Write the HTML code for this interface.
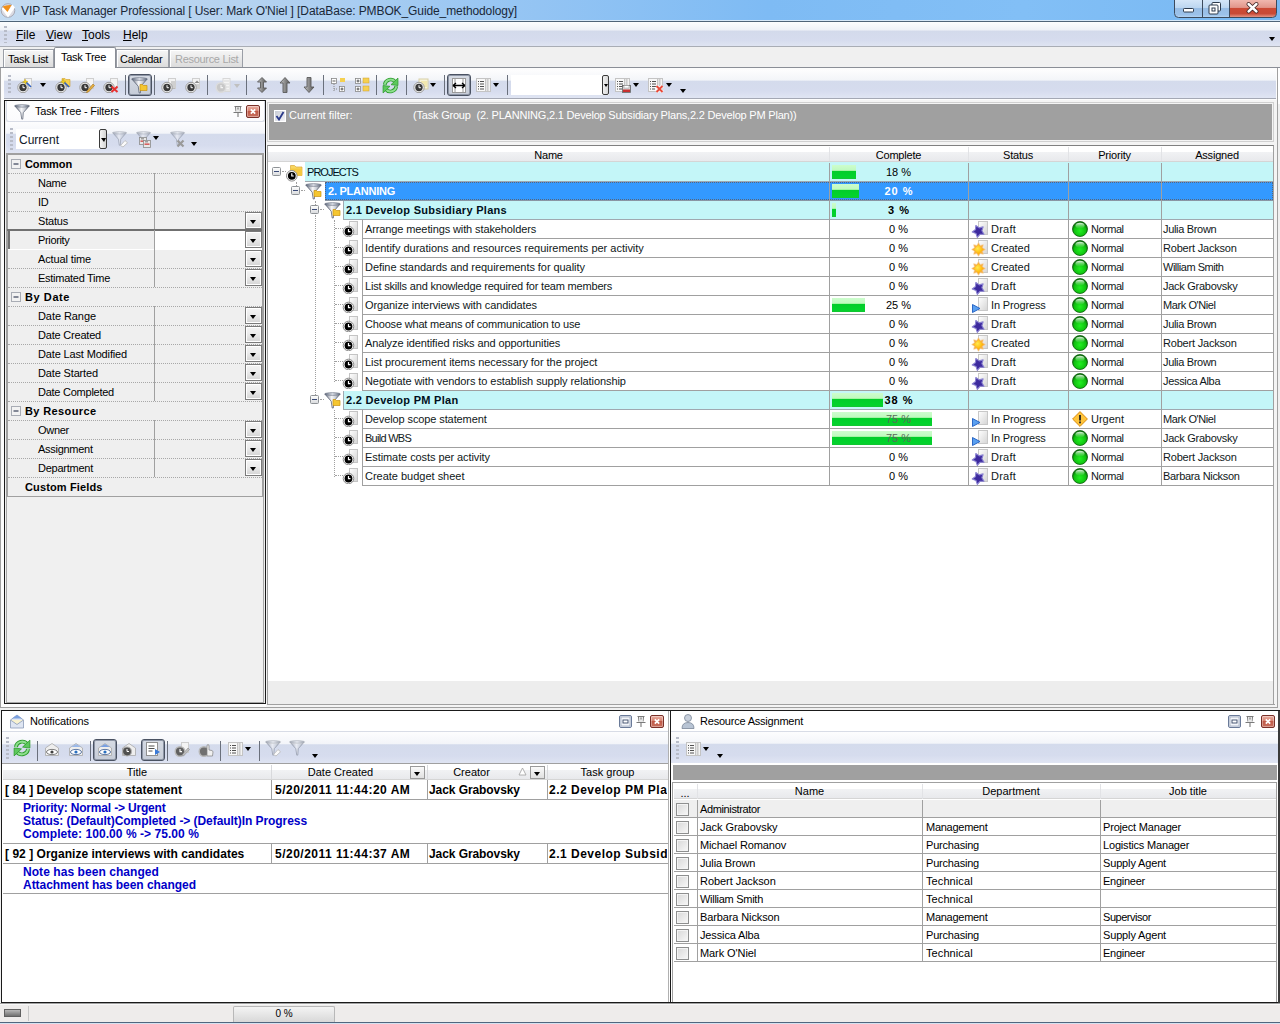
<!DOCTYPE html>
<html><head><meta charset="utf-8"><style>
*{box-sizing:border-box}
body{margin:0;width:1280px;height:1024px;position:relative;overflow:hidden;background:#f0f0f0;font-family:'Liberation Sans', sans-serif;font-size:11px;color:#000}
.a{position:absolute}
.t{position:absolute;white-space:nowrap;line-height:1}
.grip{position:absolute;width:3px;background:repeating-linear-gradient(to bottom,#b8bcc8 0 2px,transparent 2px 4px)}
.sep{position:absolute;width:1px;background:#9da3b0;border-right:1px solid #fff;width:2px}
.tb{position:absolute;background:linear-gradient(to bottom,#fdfdfe 0%,#f3f5f9 36%,#d4dbec 40%,#d6dcee 75%,#e0e5f3 100%)}
.dd{position:absolute;width:0;height:0;border-left:3px solid transparent;border-right:3px solid transparent;border-top:4px solid #000}
.pbtn{position:absolute;border:1px solid #4a5262;border-radius:3px;background:linear-gradient(#d6dbe4,#c6ccd8);box-shadow:inset 0 0 0 1px #8e96a6}
.dots{position:absolute;border-left:1px dotted #a0a0a0}
.doth{position:absolute;border-top:1px dotted #a0a0a0}
</style></head><body>

<svg width="0" height="0" style="position:absolute">
<defs>
<linearGradient id="gball" x1="0" y1="0" x2="0" y2="1"><stop offset="0" stop-color="#0b8a0b"/><stop offset="0.6" stop-color="#10d010"/><stop offset="1" stop-color="#0a9a0a"/></linearGradient>
<radialGradient id="gsun" cx="0.4" cy="0.4" r="0.6"><stop offset="0" stop-color="#ffe850"/><stop offset="1" stop-color="#ffb000"/></radialGradient>
<linearGradient id="gpage" x1="0" y1="0" x2="1" y2="1"><stop offset="0" stop-color="#ffffff"/><stop offset="1" stop-color="#d4d4d4"/></linearGradient>
<linearGradient id="gfun" x1="0" y1="0" x2="1" y2="0"><stop offset="0" stop-color="#8c8c8c"/><stop offset="0.5" stop-color="#f0f0f0"/><stop offset="1" stop-color="#9a9a9a"/></linearGradient>
<symbol id="clock" viewBox="0 0 16 17"><rect x="7.5" y="1.5" width="8" height="13" fill="url(#gpage)" stroke="#c4c4c4"/><circle cx="6.5" cy="11.5" r="5.3" fill="#fff" stroke="#8a8a8a" stroke-width="1"/><circle cx="6.5" cy="11.5" r="3.9" fill="#000"/><path d="M6.5 9v2.7h2" stroke="#fff" stroke-width="1.2" fill="none"/></symbol>
<symbol id="draft" viewBox="0 0 18 18"><rect x="7.5" y="1.5" width="9" height="13" fill="url(#gpage)" stroke="#c8c8c8"/><path d="M4.84 5.49 L8.15 7.86 L12.11 6.90 L10.87 10.79 L13.01 14.25 L8.94 14.28 L6.30 17.38 L5.01 13.52 L1.25 11.97 L4.53 9.55 Z" fill="#3d2a9e" stroke="#8880d0" stroke-width="1.1" stroke-linejoin="round"/></symbol>
<symbol id="created" viewBox="0 0 18 18"><rect x="7.5" y="1.5" width="9" height="13" fill="url(#gpage)" stroke="#c8c8c8"/><path d="M7.50 3.70 L9.18 6.43 L12.31 5.69 L11.57 8.82 L14.30 10.50 L11.57 12.18 L12.31 15.31 L9.18 14.57 L7.50 17.30 L5.82 14.57 L2.69 15.31 L3.43 12.18 L0.70 10.50 L3.43 8.82 L2.69 5.69 L5.82 6.43 Z" fill="#f8b040" stroke="#f4c890" stroke-width="0.6"/><path d="M7.5 5.8 L12.2 10.5 L7.5 15.2 L2.8 10.5 Z" fill="url(#gsun)"/></symbol>
<symbol id="inprog" viewBox="0 0 18 18"><rect x="7.5" y="1.5" width="9" height="13" fill="url(#gpage)" stroke="#c8c8c8"/><path d="M1.5 8.5 L9 12.5 L1.5 16.5 Z" fill="#5aa0f0" stroke="#1e5cc0" stroke-width="0.9" stroke-linejoin="round"/></symbol>
<linearGradient id="ghl" x1="0" y1="0" x2="0" y2="1"><stop offset="0" stop-color="#f4fff4" stop-opacity="0.95"/><stop offset="1" stop-color="#60d060" stop-opacity="0.2"/></linearGradient><radialGradient id="gball2" cx="0.5" cy="0.62" r="0.55"><stop offset="0" stop-color="#22f022"/><stop offset="0.7" stop-color="#10c010"/><stop offset="1" stop-color="#067006"/></radialGradient><symbol id="ball" viewBox="0 0 16 16"><circle cx="8" cy="8" r="7.5" fill="url(#gball2)" stroke="#0a5a0a" stroke-width="0.8"/><ellipse cx="8" cy="4.6" rx="4.6" ry="2.9" fill="url(#ghl)"/></symbol>
<symbol id="urgent" viewBox="0 0 16 16"><path d="M8 0.6 L15.4 8 L8 15.4 L0.6 8 Z" fill="#ffc43a" stroke="#d88a10" stroke-width="1"/><rect x="7.1" y="4" width="1.8" height="5.5" fill="#222"/><rect x="7.1" y="10.5" width="1.8" height="1.8" fill="#222"/></symbol>
<linearGradient id="gfun2" x1="0" y1="0" x2="1" y2="0"><stop offset="0" stop-color="#6a7284"/><stop offset="0.45" stop-color="#f8f8fa"/><stop offset="0.7" stop-color="#c8ccd4"/><stop offset="1" stop-color="#6a7284"/></linearGradient>
<linearGradient id="grim" x1="0" y1="0" x2="1" y2="0"><stop offset="0" stop-color="#707a8c"/><stop offset="0.5" stop-color="#d8dce4"/><stop offset="1" stop-color="#707a8c"/></linearGradient>
<symbol id="funnel" viewBox="0 0 18 18"><path d="M0.8 2 L16.2 2 L9.8 9.2 L9.3 16 L8.2 16 L7.2 9.2 Z" fill="url(#gfun2)" stroke="#5a6274" stroke-width="0.8" stroke-linejoin="round"/><ellipse cx="8.5" cy="2" rx="7.7" ry="1.4" fill="url(#grim)" stroke="#5a6274" stroke-width="0.5"/></symbol>
<symbol id="funfold" viewBox="0 0 18 18"><path d="M0.8 2 L16.2 2 L9.8 9.2 L9.3 16 L8.2 16 L7.2 9.2 Z" fill="url(#gfun2)" stroke="#5a6274" stroke-width="0.8" stroke-linejoin="round"/><ellipse cx="8.5" cy="2" rx="7.7" ry="1.4" fill="url(#grim)" stroke="#5a6274" stroke-width="0.5"/><path d="M9 7.5 h2.5 l1 1 h3.5 v5 h-7 z" fill="#f5c630" stroke="#c89210" stroke-width="0.7"/></symbol>
<symbol id="folderclock" viewBox="0 0 18 18"><path d="M4.5 1.5 h4 l1.5 1.5 h6 v8.5 h-11.5 z" fill="#f8d660" stroke="#d8a838" stroke-width="0.7"/><path d="M4.5 4.5 h11.5 v7 h-11.5 z" fill="#f4c840"/><circle cx="5.8" cy="11.8" r="5.3" fill="#fff" stroke="#8a8a8a" stroke-width="1"/><circle cx="5.8" cy="11.8" r="3.9" fill="#000"/><path d="M5.8 9.3v2.7h2" stroke="#fff" stroke-width="1.2" fill="none"/></symbol>
<linearGradient id="gbox" x1="0" y1="0" x2="0" y2="1"><stop offset="0" stop-color="#ffffff"/><stop offset="1" stop-color="#d8dadc"/></linearGradient><symbol id="minus" viewBox="0 0 9 9"><rect x="0.5" y="0.5" width="8" height="8" rx="1" fill="url(#gbox)" stroke="#8e9296"/><path d="M2 4.5h5" stroke="#3a4a78" stroke-width="1"/></symbol>
</defs></svg>

<div class="a" style="left:0;top:0;width:1280px;height:22px;background:linear-gradient(to right,#c4dbf1 0%,#b4d2f0 20%,#96c5f3 40%,#7ebbf4 60%,#82bff6 80%,#78b8f2 100%);border-bottom:1px solid #4f6478;box-shadow:inset 0 -1px 0 #d6e8f8"></div>
<svg class="a" style="left:0px;top:2px" width="17" height="17" viewBox="0 0 17 17"><circle cx="8" cy="8.5" r="6.8" fill="#dcdce4" stroke="#9a9aa6" stroke-width="0.8"/><path d="M1.5 6.5 L5.5 5 L8 9 L12.5 2.5 L15 5.5 L8 15.5 Z" fill="#fff"/><path d="M2.5 4.5 Q7 2.5 11.5 3 L7.5 10 Z" fill="#f0901a"/></svg>
<div class="t" style="left:21px;top:5px;font-size:12px;color:#1a2838;letter-spacing:-0.1px">VIP Task Manager Professional [ User: Mark O'Niel ] [DataBase: PMBOK_Guide_methodology]</div>
<svg class="a" style="left:1173px;top:0" width="105" height="19" viewBox="0 0 105 19">
<defs>
<linearGradient id="wbb" x1="0" y1="0" x2="0" y2="1"><stop offset="0" stop-color="#d4e6f8"/><stop offset="0.44" stop-color="#bcd6f0"/><stop offset="0.46" stop-color="#98bde4"/><stop offset="0.85" stop-color="#9cc2ea"/><stop offset="1" stop-color="#b8d8f4"/></linearGradient>
<linearGradient id="wbr" x1="0" y1="0" x2="0" y2="1"><stop offset="0" stop-color="#f0b8ae"/><stop offset="0.44" stop-color="#e2968a"/><stop offset="0.46" stop-color="#cc4a34"/><stop offset="0.8" stop-color="#c84a36"/><stop offset="1" stop-color="#e49484"/></linearGradient>
</defs>
<path d="M1.5 0 V13.5 Q1.5 17.5 5.5 17.5 H99.5 Q103.5 17.5 103.5 13.5 V0 Z" fill="url(#wbb)"/>
<path d="M56.5 0 V17 H99.5 Q103 17 103 13.5 V0 Z" fill="url(#wbr)"/>
<path d="M1.5 0 V13.5 Q1.5 17.5 5.5 17.5 H99.5 Q103.5 17.5 103.5 13.5 V0" fill="none" stroke="#3c4a5c" stroke-width="1"/>
<path d="M29.5 0 V17.5 M56.5 0 V17.5" stroke="#3c4a5c" stroke-width="1"/>
<rect x="10.5" y="8.5" width="10" height="3.5" rx="0.8" fill="#fff" stroke="#2c3a4c" stroke-width="1"/>
<rect x="39" y="2.5" width="8.5" height="8.5" rx="1" fill="#fff" stroke="#2c3a4c" stroke-width="1"/>
<rect x="36" y="5" width="9" height="9" rx="1" fill="#fff" stroke="#2c3a4c" stroke-width="1"/>
<rect x="39" y="8" width="3" height="3" fill="#fff" stroke="#2c3a4c" stroke-width="1"/>
<path d="M75.5 4 L83.5 11.5 M83.5 4 L75.5 11.5" stroke="#3a2020" stroke-width="4" stroke-linecap="round"/>
<path d="M75.5 4 L83.5 11.5 M83.5 4 L75.5 11.5" stroke="#fff" stroke-width="2.4" stroke-linecap="round"/>
</svg>
<div class="a" style="left:0;top:22px;width:1280px;height:25px;background:linear-gradient(to bottom,#fcfdfe 0%,#eef1f7 34%,#d3daeb 37%,#d6dcee 75%,#dfe4f2 100%);border-bottom:1px solid #a9adb5"></div>
<div class="grip" style="left:4px;top:26px;height:17px"></div>
<div class="t" style="left:16px;top:29px;font-size:12px;color:#000"><u style="text-decoration-thickness:1px;text-underline-offset:1px">F</u>ile</div>
<div class="t" style="left:46px;top:29px;font-size:12px;color:#000"><u style="text-decoration-thickness:1px;text-underline-offset:1px">V</u>iew</div>
<div class="t" style="left:82px;top:29px;font-size:12px;color:#000"><u style="text-decoration-thickness:1px;text-underline-offset:1px">T</u>ools</div>
<div class="t" style="left:123px;top:29px;font-size:12px;color:#000"><u style="text-decoration-thickness:1px;text-underline-offset:1px">H</u>elp</div>
<div class="dd" style="left:1269px;top:37px"></div>
<div class="a" style="left:0;top:67px;width:1280px;height:1px;background:#8a8e96"></div>
<div class="a" style="left:3px;top:49px;width:51px;height:18px;background:linear-gradient(#f6f6f6,#dcdcdc);border:1px solid #9a9ea6;border-bottom:none;box-shadow:inset 1px 1px 0 #fff"></div>
<div class="t" style="left:8px;top:54px;font-size:11px;letter-spacing:-0.3px;color:#000">Task List</div>
<div class="a" style="left:54px;top:47px;width:62px;height:21px;background:#fff;border:1px solid #8a8e96;border-bottom:none;border-radius:2px 2px 0 0"></div>
<div class="t" style="left:61px;top:52px;font-size:11px;letter-spacing:-0.3px">Task Tree</div>
<div class="a" style="left:116px;top:49px;width:53px;height:18px;background:linear-gradient(#f6f6f6,#dcdcdc);border:1px solid #9a9ea6;border-bottom:none;box-shadow:inset 1px 1px 0 #fff"></div>
<div class="t" style="left:120px;top:54px;font-size:11px;letter-spacing:-0.3px;color:#000">Calendar</div>
<div class="a" style="left:169px;top:49px;width:74px;height:18px;background:linear-gradient(#f6f6f6,#dcdcdc);border:1px solid #9a9ea6;border-bottom:none;box-shadow:inset 1px 1px 0 #fff"></div>
<div class="t" style="left:175px;top:54px;font-size:11px;letter-spacing:-0.3px;color:#a8a8a8">Resource List</div>
<div class="a" style="left:0;top:68px;width:1280px;height:36px;background:#fff"></div>
<div class="a" style="left:0px;top:68px;width:1278px;height:640px;border:1px solid #a0a0a0;border-top:none;background:#fcfcfc"></div>
<div class="tb" style="left:4px;top:70px;width:1272px;height:29px;border-bottom:1px solid #a4a8b4"></div>
<div class="grip" style="left:8px;top:75px;height:20px"></div>
<svg class="a" style="left:17px;top:77px;" width="16" height="16" viewBox="0 0 16 16"><rect x="7.5" y="1.5" width="7" height="10" fill="#f4f4f4" stroke="#cfcfcf"/><circle cx="6" cy="10.5" r="5.2" fill="#f4f4f4" stroke="#9a9a9a" stroke-width="1"/><circle cx="6" cy="10.5" r="3.7" fill="#3a3a3a"/><path d="M6 8.2v2.5h1.9" stroke="#fff" stroke-width="1" fill="none"/><path d="M9 5 L14 10" stroke="#3060c0" stroke-width="1.6"/><path d="M8 2 L9 4 L11 4.5 L9 5.5 L8.5 7.5 L7.5 5.5 L5.5 5 L7.5 4 Z" fill="#f0d020" stroke="#c0a010" stroke-width="0.4"/></svg>
<div class="dd" style="left:40px;top:83px"></div>
<svg class="a" style="left:55px;top:77px;" width="16" height="16" viewBox="0 0 16 16"><path d="M7 1.5 h3 l1 1 h4 v7 h-8 z" fill="#f5d050" stroke="#d0a030" stroke-width="0.6"/><circle cx="6" cy="10.5" r="5.2" fill="#f4f4f4" stroke="#9a9a9a" stroke-width="1"/><circle cx="6" cy="10.5" r="3.7" fill="#3a3a3a"/><path d="M6 8.2v2.5h1.9" stroke="#fff" stroke-width="1" fill="none"/><path d="M9 5 L14 10" stroke="#3060c0" stroke-width="1.6"/><path d="M8 2 L9 4 L11 4.5 L9 5.5 L8.5 7.5 L7.5 5.5 L5.5 5 L7.5 4 Z" fill="#f0d020" stroke="#c0a010" stroke-width="0.4"/></svg>
<svg class="a" style="left:79px;top:77px;" width="16" height="16" viewBox="0 0 16 16"><rect x="7.5" y="1.5" width="7" height="10" fill="#f4f4f4" stroke="#cfcfcf"/><circle cx="6" cy="10.5" r="5.2" fill="#f4f4f4" stroke="#9a9a9a" stroke-width="1"/><circle cx="6" cy="10.5" r="3.7" fill="#3a3a3a"/><path d="M6 8.2v2.5h1.9" stroke="#fff" stroke-width="1" fill="none"/><path d="M8 14 L14 7 L15.5 8.5 L9.5 15 L7.5 15.5 Z" fill="#e8b040" stroke="#a07020" stroke-width="0.6"/></svg>
<svg class="a" style="left:103px;top:77px;" width="16" height="16" viewBox="0 0 16 16"><rect x="7.5" y="1.5" width="7" height="10" fill="#f4f4f4" stroke="#cfcfcf"/><circle cx="6" cy="10.5" r="5.2" fill="#f4f4f4" stroke="#9a9a9a" stroke-width="1"/><circle cx="6" cy="10.5" r="3.7" fill="#3a3a3a"/><path d="M6 8.2v2.5h1.9" stroke="#fff" stroke-width="1" fill="none"/><path d="M8.5 9.5 L14.5 15 M14.5 9.5 L8.5 15" stroke="#e83030" stroke-width="2"/></svg>
<div class="a" style="left:125px;top:75px;width:1px;height:20px;background:#6a707c"></div>
<div class="pbtn" style="left:128px;top:74px;width:24px;height:22px"></div>
<svg class="a" style="left:131px;top:77px;" width="18" height="18" viewBox="0 0 18 18"><use href="#funfold" width="18" height="18"/></svg>
<div class="a" style="left:154px;top:75px;width:1px;height:20px;background:#6a707c"></div>
<svg class="a" style="left:161px;top:77px;" width="16" height="16" viewBox="0 0 16 16"><rect x="7.5" y="1.5" width="7" height="10" fill="#f4f4f4" stroke="#cfcfcf"/><path d="M10 5h4 M10 7h4 M10 9h4 M10 11h4" stroke="#9a9a9a" stroke-width="0.8"/><circle cx="6" cy="10.5" r="5.2" fill="#f4f4f4" stroke="#9a9a9a" stroke-width="1"/><circle cx="6" cy="10.5" r="3.7" fill="#3a3a3a"/><path d="M6 8.2v2.5h1.9" stroke="#fff" stroke-width="1" fill="none"/></svg>
<svg class="a" style="left:185px;top:77px;" width="16" height="16" viewBox="0 0 16 16"><rect x="7.5" y="1.5" width="7" height="10" fill="#f4f4f4" stroke="#cfcfcf"/><path d="M9.5 6 L12 3.5 L14.5 6 Z" fill="#8a8a8a"/><path d="M10 8h4 M10 10h4" stroke="#9a9a9a" stroke-width="0.8"/><circle cx="6" cy="10.5" r="5.2" fill="#f4f4f4" stroke="#9a9a9a" stroke-width="1"/><circle cx="6" cy="10.5" r="3.7" fill="#3a3a3a"/><path d="M6 8.2v2.5h1.9" stroke="#fff" stroke-width="1" fill="none"/></svg>
<div class="a" style="left:207px;top:75px;width:1px;height:20px;background:#6a707c"></div>
<svg class="a" style="left:215px;top:77px;" width="16" height="16" viewBox="0 0 16 16"><rect x="8" y="1.5" width="7" height="13" fill="#f4f4f4" stroke="#d8d8d8"/><path d="M9 4h5M9 7h5M9 10h5M9 13h5" stroke="#d8d8d8"/><circle cx="6" cy="10.5" r="4.8" fill="#c8c8c8" stroke="#dcdcdc" stroke-width="1.4"/><path d="M6 8v2.6h2" stroke="#f4f4f4" stroke-width="1.1" fill="none"/></svg>
<div class="a" style="left:234px;top:84px;width:0;height:0;border-left:3px solid transparent;border-right:3px solid transparent;border-top:4px solid #c0c0c0"></div>
<div class="a" style="left:246px;top:75px;width:1px;height:20px;background:#6a707c"></div>
<svg width="0" height="0" style="position:absolute"><defs><linearGradient id="garr" x1="0" y1="0" x2="1" y2="0"><stop offset="0" stop-color="#d0d0d0"/><stop offset="0.5" stop-color="#8a8a8a"/><stop offset="1" stop-color="#5a5a5a"/></linearGradient></defs></svg>
<svg class="a" style="left:254px;top:77px;" width="16" height="16" viewBox="0 0 16 16"><path d="M8 0.5 L12.5 5 L9.5 5 L9.5 11 L12.5 11 L8 15.5 L3.5 11 L6.5 11 L6.5 5 L3.5 5 Z" fill="url(#garr)" stroke="#5a5a5a" stroke-width="0.9"/></svg>
<svg class="a" style="left:277px;top:77px;" width="16" height="16" viewBox="0 0 16 16"><path d="M8 0.5 L13 6 L10 6 L10 15.5 L6 15.5 L6 6 L3 6 Z" fill="url(#garr)" stroke="#5a5a5a" stroke-width="0.9"/></svg>
<svg class="a" style="left:301px;top:77px;" width="16" height="16" viewBox="0 0 16 16"><path d="M8 15.5 L13 10 L10 10 L10 0.5 L6 0.5 L6 10 L3 10 Z" fill="url(#garr)" stroke="#5a5a5a" stroke-width="0.9"/></svg>
<div class="a" style="left:323px;top:75px;width:1px;height:20px;background:#6a707c"></div>
<svg class="a" style="left:330px;top:77px;" width="16" height="16" viewBox="0 0 16 16"><rect x="1.5" y="1.5" width="5" height="5" fill="#fff" stroke="#888" stroke-width="0.8"/><path d="M2.5 4h3" stroke="#333" stroke-width="0.8"/><rect x="9.5" y="9.5" width="5" height="5" fill="#fff" stroke="#888" stroke-width="0.8"/><path d="M10.5 12h3" stroke="#333" stroke-width="0.8"/><path d="M12 10.5v3" stroke="#333" stroke-width="0.8"/><rect x="10" y="1" width="5" height="4" fill="#f5d050"/><path d="M4 7v8 M4 12h4" stroke="#888" stroke-dasharray="1 1"/></svg>
<svg class="a" style="left:354px;top:77px;" width="16" height="16" viewBox="0 0 16 16"><rect x="1.5" y="1.5" width="5" height="5" fill="#fff" stroke="#888" stroke-width="0.8"/><path d="M2.5 4h3" stroke="#333" stroke-width="0.8"/><path d="M4 2.5v3" stroke="#333" stroke-width="0.8"/><rect x="1.5" y="9.5" width="5" height="5" fill="#fff" stroke="#888" stroke-width="0.8"/><path d="M2.5 12h3" stroke="#333" stroke-width="0.8"/><path d="M4 10.5v3" stroke="#333" stroke-width="0.8"/><rect x="9" y="1" width="6" height="5" fill="#f5d050" stroke="#d0a030" stroke-width="0.5"/><rect x="9" y="9" width="6" height="5" fill="#f5d050" stroke="#d0a030" stroke-width="0.5"/></svg>
<div class="a" style="left:376px;top:75px;width:1px;height:20px;background:#6a707c"></div>
<svg class="a" style="left:382px;top:77px;" width="17" height="17" viewBox="0 0 16 16"><path d="M2.6 7.2 A5.6 5.6 0 0 1 12.6 4.6" stroke="#2a9a2a" stroke-width="3.4" fill="none"/><path d="M2.6 7.2 A5.6 5.6 0 0 1 12.6 4.6" stroke="#8ee08e" stroke-width="1.8" fill="none"/><path d="M15 1 L15 8 L8.5 7.2 Z" fill="#5cc85c" stroke="#2a9a2a" stroke-width="0.7"/><path d="M13.4 8.8 A5.6 5.6 0 0 1 3.4 11.4" stroke="#2a9a2a" stroke-width="3.4" fill="none"/><path d="M13.4 8.8 A5.6 5.6 0 0 1 3.4 11.4" stroke="#8ee08e" stroke-width="1.8" fill="none"/><path d="M1 15 L1 8 L7.5 8.8 Z" fill="#5cc85c" stroke="#2a9a2a" stroke-width="0.7"/></svg>
<div class="a" style="left:406px;top:75px;width:1px;height:20px;background:#6a707c"></div>
<svg class="a" style="left:413px;top:77px;" width="16" height="16" viewBox="0 0 16 16"><rect x="6" y="2" width="9" height="10" fill="#f8f4d8" stroke="#d8d0a8"/><rect x="8" y="4" width="6" height="6" fill="#f2e8b0"/><circle cx="6" cy="10.5" r="5.2" fill="#f4f4f4" stroke="#9a9a9a" stroke-width="1"/><circle cx="6" cy="10.5" r="3.7" fill="#3a3a3a"/><path d="M6 8.2v2.5h1.9" stroke="#fff" stroke-width="1" fill="none"/></svg>
<div class="dd" style="left:430px;top:83px"></div>
<div class="a" style="left:444px;top:75px;width:1px;height:20px;background:#6a707c"></div>
<div class="pbtn" style="left:447px;top:74px;width:24px;height:22px"></div>
<svg class="a" style="left:451px;top:78px;" width="16" height="16" viewBox="0 0 16 16"><rect x="1.5" y="0.5" width="13" height="14" fill="#fff" stroke="#9a9a9a"/><path d="M4 0.5v14 M12 0.5v14" stroke="#9a9a9a"/><path d="M2 7.5h12 M2 7.5 L5 5 M2 7.5 L5 10 M14 7.5 L11 5 M14 7.5 L11 10" stroke="#000" stroke-width="1.3" fill="none"/></svg>
<svg class="a" style="left:475px;top:77px;" width="16" height="16" viewBox="0 0 16 16"><rect x="1.5" y="1.5" width="9" height="13" fill="#f8f8f8" stroke="#c4c4c4"/><path d="M3 4.5h1 M5 4.5h4 M3 7h1 M5 7h4 M3 9.5h1 M5 9.5h4 M3 12h1 M5 12h4" stroke="#505050" stroke-width="1"/><rect x="10.5" y="1.5" width="2.5" height="13" fill="#e4e4e4" stroke="#c4c4c4"/><rect x="13" y="1.5" width="2.5" height="13" fill="#f4f4f4" stroke="#c4c4c4"/></svg>
<div class="dd" style="left:493px;top:83px"></div>
<div class="a" style="left:507px;top:75px;width:1px;height:20px;background:#6a707c"></div>
<div class="a" style="left:511px;top:75px;width:98px;height:20px;background:#fff;border:1px solid #fff"></div>
<div class="a" style="left:602px;top:75px;width:7px;height:20px;background:linear-gradient(to right,#f0f0f0,#d8d8d8);border:1px solid #3a3a3a;border-radius:2px"></div>
<div class="a" style="left:604px;top:84px;width:0;height:0;border-left:2px solid transparent;border-right:2px solid transparent;border-top:3px solid #000"></div>
<svg class="a" style="left:615px;top:77px;" width="16" height="16" viewBox="0 0 16 16"><rect x="0.5" y="1.5" width="9" height="13" fill="#f8f8f8" stroke="#c4c4c4"/><path d="M2 4.5h1 M4 4.5h4 M2 7h1 M4 7h4 M2 9.5h1 M4 9.5h4 M2 12h1 M4 12h3" stroke="#505050" stroke-width="1"/><rect x="9.5" y="1.5" width="2.5" height="13" fill="#e4e4e4" stroke="#c4c4c4"/><rect x="12" y="1.5" width="2.5" height="13" fill="#f4f4f4" stroke="#c4c4c4"/><rect x="7.5" y="8.5" width="8" height="7" fill="#d8d8d8" stroke="#606060" stroke-width="0.8"/><rect x="9" y="8.5" width="5" height="2.5" fill="#fff" stroke="#909090" stroke-width="0.5"/><rect x="8" y="12.5" width="7" height="2.5" fill="#c83030"/></svg>
<div class="dd" style="left:633px;top:83px"></div>
<svg class="a" style="left:648px;top:77px;" width="16" height="16" viewBox="0 0 16 16"><rect x="0.5" y="1.5" width="9" height="13" fill="#f8f8f8" stroke="#c4c4c4"/><path d="M2 4.5h1 M4 4.5h4 M2 7h1 M4 7h4 M2 9.5h1 M4 9.5h4 M2 12h1 M4 12h3" stroke="#505050" stroke-width="1"/><rect x="9.5" y="1.5" width="2.5" height="13" fill="#e4e4e4" stroke="#c4c4c4"/><rect x="12" y="1.5" width="2.5" height="13" fill="#f4f4f4" stroke="#c4c4c4"/><path d="M8.5 9 L14.5 15 M14.5 9 L8.5 15" stroke="#fff" stroke-width="3.4"/><path d="M8.5 9 L14.5 15 M14.5 9 L8.5 15" stroke="#e84a3a" stroke-width="2"/></svg>
<div class="dd" style="left:666px;top:83px"></div>
<div class="dd" style="left:680px;top:89px"></div>
<div class="a" style="left:4px;top:100px;width:262px;height:604px;border:1px solid #1a1a1a;border-width:1px 1px 1px 1px;background:#f0f0f0"></div>
<div class="a" style="left:6px;top:101px;width:259px;height:21px;background:linear-gradient(#fff,#fbfbfd);border:1px solid #d8dce6;border-top:none;border-radius:0 0 3px 3px"></div>
<svg class="a" style="left:14px;top:104px;" width="17" height="17" viewBox="0 0 18 18"><use href="#funnel" width="18" height="18"/></svg>
<div class="t" style="left:35px;top:106px;font-size:11px;letter-spacing:-0.18px">Task Tree - Filters</div>
<svg class="a" style="left:232px;top:105px;" width="12" height="12" viewBox="0 0 12 12"><path d="M2.5 1.5 h7 M3.5 1.5 L4 6.5 M8.5 1.5 L8 6.5 M1.5 7.5 h9 M6 7.5 v4.5" stroke="#7a7a7a" stroke-width="1.1" fill="none"/><rect x="4.3" y="2" width="3.4" height="5" fill="#e8e8e8"/><rect x="5.2" y="2.5" width="1.6" height="2" fill="#9a9a9a"/></svg>
<div class="a" style="left:246px;top:105px;width:14px;height:13px;border:1px solid #7a3028;border-radius:2px;background:linear-gradient(#eab0a4,#d88270 45%,#c05a48 50%,#c8705e);box-shadow:inset 0 0 0 1px rgba(255,255,255,0.35)"></div><svg class="a" style="left:246px;top:105px" width="14" height="13" viewBox="0 0 14 13"><path d="M4.8 4.3 L9.2 8.7 M9.2 4.3 L4.8 8.7" stroke="#fff" stroke-width="1.7"/></svg>
<div class="tb" style="left:6px;top:122px;width:259px;height:31px"></div>
<div class="grip" style="left:10px;top:128px;height:22px"></div>
<div class="a" style="left:16px;top:129px;width:84px;height:20px;background:#fff"></div>
<div class="t" style="left:19px;top:134px;font-size:12px;color:#101828">Current</div>
<div class="a" style="left:99px;top:129px;width:8px;height:20px;background:linear-gradient(to right,#f4f4f4,#d4d4d4);border:1px solid #3a3a3a;border-radius:2px"></div>
<div class="a" style="left:101px;top:138px;width:0;height:0;border-left:3px solid transparent;border-right:2px solid transparent;border-top:4px solid #000"></div>
<svg class="a" style="left:112px;top:131px;" width="17" height="17" viewBox="0 0 17 17"><g opacity="0.5"><use href="#funnel" x="0" y="0" width="16" height="16"/></g><path d="M8.5 14.5 L13 9.5 L15.5 11.8 L11 16 Z" fill="#fafafa" stroke="#b8b8b8" stroke-width="0.8" stroke-linejoin="round"/></svg>
<svg class="a" style="left:136px;top:131px;" width="17" height="17" viewBox="0 0 17 17"><g opacity="0.5"><use href="#funnel" x="0" y="0" width="16" height="16"/></g><rect x="3.5" y="6.5" width="7" height="7" fill="#e8e8e8" stroke="#8a8a8a" stroke-width="0.8"/><rect x="4.5" y="9.5" width="5" height="1.3" fill="#d04040"/><rect x="5" y="6.5" width="3" height="2" fill="#a0a0a0"/><rect x="7.5" y="9.5" width="7" height="7" fill="#e8e8e8" stroke="#8a8a8a" stroke-width="0.8"/><rect x="8.5" y="12.5" width="5" height="1.3" fill="#d04040"/><rect x="9" y="9.5" width="3" height="2" fill="#a0a0a0"/></svg>
<div class="dd" style="left:153px;top:136px"></div>
<svg class="a" style="left:170px;top:131px;" width="17" height="17" viewBox="0 0 17 17"><g opacity="0.5"><use href="#funnel" x="0" y="0" width="16" height="16"/></g><path d="M7.5 9.5 L13.5 15.5 M13.5 9.5 L7.5 15.5" stroke="#9a9a9a" stroke-width="2.2"/></svg>
<div class="dd" style="left:191px;top:142px"></div>
<div class="a" style="left:6px;top:153px;width:258px;height:550px;border:1px solid #a8a8a8;border-top:none"></div>
<div class="a" style="left:6px;top:153px;width:258px;height:344px;border:2px solid #a0a0a0;border-width:2px 2px 1px 2px;background:#efefef"></div>
<svg class="a" style="left:11px;top:159px;" width="10" height="10" viewBox="0 0 10 10"><rect x="0.5" y="0.5" width="9" height="9" fill="#f2f2f2" stroke="#a8acb4"/><path d="M2.5 5h5" stroke="#384058" stroke-width="1.2"/></svg>
<div class="t" style="left:25px;top:159px;font-size:11px;font-weight:bold;letter-spacing:-0.11px">Common</div>
<div class="a" style="left:8px;top:173px;width:254px;height:0;border-top:1px dotted #a8a8a8"></div>
<div class="t" style="left:38px;top:178px;font-size:11px;letter-spacing:-0.24px">Name</div>
<div class="a" style="left:154px;top:173px;width:1px;height:19px;background:#a0a0a0"></div>
<div class="a" style="left:8px;top:192px;width:254px;height:0;border-top:1px dotted #a8a8a8"></div>
<div class="t" style="left:38px;top:197px;font-size:11px;letter-spacing:-0.2px">ID</div>
<div class="a" style="left:154px;top:192px;width:1px;height:19px;background:#a0a0a0"></div>
<div class="a" style="left:8px;top:211px;width:254px;height:0;border-top:1px dotted #a8a8a8"></div>
<div class="t" style="left:38px;top:216px;font-size:11px;letter-spacing:-0.2px">Status</div>
<div class="a" style="left:154px;top:211px;width:1px;height:19px;background:#a0a0a0"></div>
<div class="a" style="left:245px;top:212px;width:17px;height:17px;border:1px solid #7a7a7a;box-shadow:inset 1px 1px 0 #fff,inset -1px -1px 0 #fff;background:linear-gradient(#f4f4f4 0%,#ececec 45%,#d4d4d4 100%)"></div>
<div class="a" style="left:250px;top:220px;width:0;height:0;border-left:3.5px solid transparent;border-right:3.5px solid transparent;border-top:4.5px solid #000"></div>
<div class="a" style="left:8px;top:230px;width:254px;height:0;border-top:1px dotted #a8a8a8"></div>
<div class="a" style="left:7px;top:229px;width:255px;height:2px;background:#707070"></div>
<div class="a" style="left:8px;top:231px;width:2px;height:18px;background:#707070"></div>
<div class="a" style="left:155px;top:231px;width:107px;height:18px;background:#fff"></div>
<div class="t" style="left:38px;top:235px;font-size:11px;letter-spacing:-0.35px">Priority</div>
<div class="a" style="left:154px;top:230px;width:1px;height:19px;background:#a0a0a0"></div>
<div class="a" style="left:245px;top:231px;width:17px;height:17px;border:1px solid #7a7a7a;box-shadow:inset 1px 1px 0 #fff,inset -1px -1px 0 #fff;background:linear-gradient(#f4f4f4 0%,#ececec 45%,#d4d4d4 100%)"></div>
<div class="a" style="left:250px;top:239px;width:0;height:0;border-left:3.5px solid transparent;border-right:3.5px solid transparent;border-top:4.5px solid #000"></div>
<div class="a" style="left:8px;top:249px;width:254px;height:1px;background:#fff"></div>
<div class="t" style="left:38px;top:254px;font-size:11px;letter-spacing:-0.13px">Actual time</div>
<div class="a" style="left:154px;top:249px;width:1px;height:19px;background:#a0a0a0"></div>
<div class="a" style="left:245px;top:250px;width:17px;height:17px;border:1px solid #7a7a7a;box-shadow:inset 1px 1px 0 #fff,inset -1px -1px 0 #fff;background:linear-gradient(#f4f4f4 0%,#ececec 45%,#d4d4d4 100%)"></div>
<div class="a" style="left:250px;top:258px;width:0;height:0;border-left:3.5px solid transparent;border-right:3.5px solid transparent;border-top:4.5px solid #000"></div>
<div class="a" style="left:8px;top:268px;width:254px;height:0;border-top:1px dotted #a8a8a8"></div>
<div class="t" style="left:38px;top:273px;font-size:11px;letter-spacing:-0.27px">Estimated Time</div>
<div class="a" style="left:154px;top:268px;width:1px;height:19px;background:#a0a0a0"></div>
<div class="a" style="left:245px;top:269px;width:17px;height:17px;border:1px solid #7a7a7a;box-shadow:inset 1px 1px 0 #fff,inset -1px -1px 0 #fff;background:linear-gradient(#f4f4f4 0%,#ececec 45%,#d4d4d4 100%)"></div>
<div class="a" style="left:250px;top:277px;width:0;height:0;border-left:3.5px solid transparent;border-right:3.5px solid transparent;border-top:4.5px solid #000"></div>
<div class="a" style="left:8px;top:287px;width:254px;height:0;border-top:1px dotted #a8a8a8"></div>
<svg class="a" style="left:11px;top:292px;" width="10" height="10" viewBox="0 0 10 10"><rect x="0.5" y="0.5" width="9" height="9" fill="#f2f2f2" stroke="#a8acb4"/><path d="M2.5 5h5" stroke="#384058" stroke-width="1.2"/></svg>
<div class="t" style="left:25px;top:292px;font-size:11px;font-weight:bold;letter-spacing:0.58px">By Date</div>
<div class="a" style="left:8px;top:306px;width:254px;height:0;border-top:1px dotted #a8a8a8"></div>
<div class="t" style="left:38px;top:311px;font-size:11px;letter-spacing:-0.07px">Date Range</div>
<div class="a" style="left:154px;top:306px;width:1px;height:19px;background:#a0a0a0"></div>
<div class="a" style="left:245px;top:307px;width:17px;height:17px;border:1px solid #7a7a7a;box-shadow:inset 1px 1px 0 #fff,inset -1px -1px 0 #fff;background:linear-gradient(#f4f4f4 0%,#ececec 45%,#d4d4d4 100%)"></div>
<div class="a" style="left:250px;top:315px;width:0;height:0;border-left:3.5px solid transparent;border-right:3.5px solid transparent;border-top:4.5px solid #000"></div>
<div class="a" style="left:8px;top:325px;width:254px;height:0;border-top:1px dotted #a8a8a8"></div>
<div class="t" style="left:38px;top:330px;font-size:11px;letter-spacing:-0.2px">Date Created</div>
<div class="a" style="left:154px;top:325px;width:1px;height:19px;background:#a0a0a0"></div>
<div class="a" style="left:245px;top:326px;width:17px;height:17px;border:1px solid #7a7a7a;box-shadow:inset 1px 1px 0 #fff,inset -1px -1px 0 #fff;background:linear-gradient(#f4f4f4 0%,#ececec 45%,#d4d4d4 100%)"></div>
<div class="a" style="left:250px;top:334px;width:0;height:0;border-left:3.5px solid transparent;border-right:3.5px solid transparent;border-top:4.5px solid #000"></div>
<div class="a" style="left:8px;top:344px;width:254px;height:0;border-top:1px dotted #a8a8a8"></div>
<div class="t" style="left:38px;top:349px;font-size:11px;letter-spacing:-0.15px">Date Last Modified</div>
<div class="a" style="left:154px;top:344px;width:1px;height:19px;background:#a0a0a0"></div>
<div class="a" style="left:245px;top:345px;width:17px;height:17px;border:1px solid #7a7a7a;box-shadow:inset 1px 1px 0 #fff,inset -1px -1px 0 #fff;background:linear-gradient(#f4f4f4 0%,#ececec 45%,#d4d4d4 100%)"></div>
<div class="a" style="left:250px;top:353px;width:0;height:0;border-left:3.5px solid transparent;border-right:3.5px solid transparent;border-top:4.5px solid #000"></div>
<div class="a" style="left:8px;top:363px;width:254px;height:0;border-top:1px dotted #a8a8a8"></div>
<div class="t" style="left:38px;top:368px;font-size:11px;letter-spacing:-0.15px">Date Started</div>
<div class="a" style="left:154px;top:363px;width:1px;height:19px;background:#a0a0a0"></div>
<div class="a" style="left:245px;top:364px;width:17px;height:17px;border:1px solid #7a7a7a;box-shadow:inset 1px 1px 0 #fff,inset -1px -1px 0 #fff;background:linear-gradient(#f4f4f4 0%,#ececec 45%,#d4d4d4 100%)"></div>
<div class="a" style="left:250px;top:372px;width:0;height:0;border-left:3.5px solid transparent;border-right:3.5px solid transparent;border-top:4.5px solid #000"></div>
<div class="a" style="left:8px;top:382px;width:254px;height:0;border-top:1px dotted #a8a8a8"></div>
<div class="t" style="left:38px;top:387px;font-size:11px;letter-spacing:-0.25px">Date Completed</div>
<div class="a" style="left:154px;top:382px;width:1px;height:19px;background:#a0a0a0"></div>
<div class="a" style="left:245px;top:383px;width:17px;height:17px;border:1px solid #7a7a7a;box-shadow:inset 1px 1px 0 #fff,inset -1px -1px 0 #fff;background:linear-gradient(#f4f4f4 0%,#ececec 45%,#d4d4d4 100%)"></div>
<div class="a" style="left:250px;top:391px;width:0;height:0;border-left:3.5px solid transparent;border-right:3.5px solid transparent;border-top:4.5px solid #000"></div>
<div class="a" style="left:8px;top:401px;width:254px;height:0;border-top:1px dotted #a8a8a8"></div>
<svg class="a" style="left:11px;top:406px;" width="10" height="10" viewBox="0 0 10 10"><rect x="0.5" y="0.5" width="9" height="9" fill="#f2f2f2" stroke="#a8acb4"/><path d="M2.5 5h5" stroke="#384058" stroke-width="1.2"/></svg>
<div class="t" style="left:25px;top:406px;font-size:11px;font-weight:bold;letter-spacing:0.38px">By Resource</div>
<div class="a" style="left:8px;top:420px;width:254px;height:0;border-top:1px dotted #a8a8a8"></div>
<div class="t" style="left:38px;top:425px;font-size:11px;letter-spacing:-0.28px">Owner</div>
<div class="a" style="left:154px;top:420px;width:1px;height:19px;background:#a0a0a0"></div>
<div class="a" style="left:245px;top:421px;width:17px;height:17px;border:1px solid #7a7a7a;box-shadow:inset 1px 1px 0 #fff,inset -1px -1px 0 #fff;background:linear-gradient(#f4f4f4 0%,#ececec 45%,#d4d4d4 100%)"></div>
<div class="a" style="left:250px;top:429px;width:0;height:0;border-left:3.5px solid transparent;border-right:3.5px solid transparent;border-top:4.5px solid #000"></div>
<div class="a" style="left:8px;top:439px;width:254px;height:0;border-top:1px dotted #a8a8a8"></div>
<div class="t" style="left:38px;top:444px;font-size:11px;letter-spacing:-0.28px">Assignment</div>
<div class="a" style="left:154px;top:439px;width:1px;height:19px;background:#a0a0a0"></div>
<div class="a" style="left:245px;top:440px;width:17px;height:17px;border:1px solid #7a7a7a;box-shadow:inset 1px 1px 0 #fff,inset -1px -1px 0 #fff;background:linear-gradient(#f4f4f4 0%,#ececec 45%,#d4d4d4 100%)"></div>
<div class="a" style="left:250px;top:448px;width:0;height:0;border-left:3.5px solid transparent;border-right:3.5px solid transparent;border-top:4.5px solid #000"></div>
<div class="a" style="left:8px;top:458px;width:254px;height:0;border-top:1px dotted #a8a8a8"></div>
<div class="t" style="left:38px;top:463px;font-size:11px;letter-spacing:-0.25px">Department</div>
<div class="a" style="left:154px;top:458px;width:1px;height:19px;background:#a0a0a0"></div>
<div class="a" style="left:245px;top:459px;width:17px;height:17px;border:1px solid #7a7a7a;box-shadow:inset 1px 1px 0 #fff,inset -1px -1px 0 #fff;background:linear-gradient(#f4f4f4 0%,#ececec 45%,#d4d4d4 100%)"></div>
<div class="a" style="left:250px;top:467px;width:0;height:0;border-left:3.5px solid transparent;border-right:3.5px solid transparent;border-top:4.5px solid #000"></div>
<div class="a" style="left:8px;top:477px;width:254px;height:0;border-top:1px dotted #a8a8a8"></div>
<div class="t" style="left:25px;top:482px;font-size:11px;font-weight:bold;letter-spacing:0.14px">Custom Fields</div>
<div class="a" style="left:266px;top:100px;width:1012px;height:608px;background:#f4f4f4;border-right:1px solid #a0a0a0;border-bottom:1px solid #a0a0a0"></div>
<div class="a" style="left:267px;top:102px;width:1007px;height:40px;border:1px solid #d0d0d0;background:#a0a0a0;box-shadow:inset 0 0 0 1px #f4f4f4"></div>
<div class="a" style="left:274px;top:110px;width:12px;height:12px;border:1px solid #fff;background:linear-gradient(135deg,#c8ccd4,#f4f4f8)"></div>
<svg class="a" style="left:274px;top:110px;" width="11" height="11" viewBox="0 0 11 11"><path d="M2.5 6 L5 9.5 L9.5 2" stroke="#2a3a8a" stroke-width="1.8" fill="none"/></svg>
<div class="t" style="left:289px;top:110px;font-size:11px;color:#fff">Current filter:</div>
<div class="t" style="left:413px;top:110px;font-size:11px;color:#fff;letter-spacing:-0.2px">(Task Group&nbsp; (2. PLANNING,2.1 Develop Subsidiary Plans,2.2 Develop PM Plan))</div>
<div class="a" style="left:267px;top:145px;width:1007px;height:560px;border:1px solid #a0a0a0;border-top-color:#808080;border-right:1px solid #a0a0a0;border-bottom:none;background:#fff"></div>
<div class="a" style="left:268px;top:681px;width:1005px;height:23px;background:#ededed"></div>
<div class="a" style="left:267px;top:704px;width:1008px;height:1px;background:#a0a0a0"></div>
<div class="a" style="left:268px;top:146px;width:1005px;height:16px;background:linear-gradient(#fff 0%,#fff 40%,#f1f2f4 41%,#e8e9ec 100%);border-bottom:1px solid #d5d5d5"></div>
<div class="t" style="left:268px;width:561px;top:150px;text-align:center;font-size:11px;letter-spacing:-0.2px">Name</div>
<div class="a" style="left:829px;top:147px;width:1px;height:14px;background:#e2e3e6"></div>
<div class="t" style="left:829px;width:139px;top:150px;text-align:center;font-size:11px;letter-spacing:-0.2px">Complete</div>
<div class="a" style="left:968px;top:147px;width:1px;height:14px;background:#e2e3e6"></div>
<div class="t" style="left:968px;width:100px;top:150px;text-align:center;font-size:11px;letter-spacing:-0.2px">Status</div>
<div class="a" style="left:1068px;top:147px;width:1px;height:14px;background:#e2e3e6"></div>
<div class="t" style="left:1068px;width:93px;top:150px;text-align:center;font-size:11px;letter-spacing:-0.2px">Priority</div>
<div class="a" style="left:1161px;top:147px;width:1px;height:14px;background:#e2e3e6"></div>
<div class="t" style="left:1161px;width:112px;top:150px;text-align:center;font-size:11px;letter-spacing:-0.2px">Assigned</div>
<div class="doth" style="left:282px;top:171px;width:4px"></div>
<div class="dots" style="left:296px;top:182px;height:4px"></div>
<div class="doth" style="left:301px;top:190px;width:4px"></div>
<div class="dots" style="left:315px;top:201px;height:4px"></div>
<div class="dots" style="left:315px;top:215px;height:180px"></div>
<div class="doth" style="left:320px;top:209px;width:4px"></div>
<div class="doth" style="left:320px;top:399px;width:4px"></div>
<div class="dots" style="left:334px;top:220px;height:162px"></div>
<div class="dots" style="left:334px;top:410px;height:67px"></div>
<svg class="a" style="left:272px;top:167px;" width="9" height="9" viewBox="0 0 9 9"><use href="#minus" width="9" height="9"/></svg>
<svg class="a" style="left:286px;top:164px;" width="18" height="18" viewBox="0 0 18 18"><use href="#folderclock" width="18" height="18"/></svg>
<div class="a" style="left:305px;top:162px;width:968px;height:20px;background:#c4f6f8;border-bottom:1px solid #a0a8b0"></div>
<div class="t" style="left:307px;top:167px;font-size:11px;letter-spacing:-0.96px;color:#001020">PROJECTS</div>
<div class="a" style="left:829px;top:163px;width:1px;height:19px;background:#a0a0a0"></div>
<div class="a" style="left:968px;top:163px;width:1px;height:19px;background:#a0a0a0"></div>
<div class="a" style="left:1068px;top:163px;width:1px;height:19px;background:#a0a0a0"></div>
<div class="a" style="left:1161px;top:163px;width:1px;height:19px;background:#a0a0a0"></div>
<div class="a" style="left:832px;top:165px;width:24px;height:14px;background:linear-gradient(#cdfdcd 0%,#c0fac0 35%,#90f290 42%,#02cc2a 43%,#02d42c 85%,#14c432 100%)"></div>
<div class="t" style="left:829px;width:139px;top:167px;text-align:center;font-size:11px;font-weight:normal;color:#000;letter-spacing:0;text-indent:0">18 %</div>
<svg class="a" style="left:291px;top:186px;" width="9" height="9" viewBox="0 0 9 9"><use href="#minus" width="9" height="9"/></svg>
<svg class="a" style="left:305px;top:183px;" width="18" height="18" viewBox="0 0 18 18"><use href="#funfold" width="18" height="18"/></svg>
<div class="a" style="left:325px;top:182px;width:948px;height:18px;background:#3399ff;border:1px dotted #56667c"></div>
<div class="a" style="left:325px;top:200px;width:948px;height:1px;background:#8a96a4"></div>
<div class="t" style="left:328px;top:186px;font-size:11px;font-weight:bold;color:#fff;letter-spacing:-0.24px">2. PLANNING</div>
<div class="a" style="left:829px;top:182px;width:1px;height:19px;background:#a0a0a0"></div>
<div class="a" style="left:968px;top:182px;width:1px;height:19px;background:#a0a0a0"></div>
<div class="a" style="left:1068px;top:182px;width:1px;height:19px;background:#a0a0a0"></div>
<div class="a" style="left:1161px;top:182px;width:1px;height:19px;background:#a0a0a0"></div>
<div class="a" style="left:832px;top:184px;width:27px;height:14px;background:linear-gradient(#cdfdcd 0%,#c0fac0 35%,#90f290 42%,#02cc2a 43%,#02d42c 85%,#14c432 100%)"></div>
<div class="t" style="left:829px;width:139px;top:186px;text-align:center;font-size:11px;font-weight:bold;color:#fff;letter-spacing:1px;text-indent:1px">20 %</div>
<svg class="a" style="left:310px;top:205px;" width="9" height="9" viewBox="0 0 9 9"><use href="#minus" width="9" height="9"/></svg>
<svg class="a" style="left:324px;top:202px;" width="18" height="18" viewBox="0 0 18 18"><use href="#funfold" width="18" height="18"/></svg>
<div class="a" style="left:343px;top:201px;width:930px;height:19px;background:#c4f6f8;border-bottom:1px solid #a0a8b0;border-left:1px solid #a0a8b0"></div>
<div class="t" style="left:346px;top:205px;font-size:11px;font-weight:bold;letter-spacing:0.29px;color:#001020">2.1 Develop Subsidiary Plans</div>
<div class="a" style="left:829px;top:201px;width:1px;height:19px;background:#a0a0a0"></div>
<div class="a" style="left:968px;top:201px;width:1px;height:19px;background:#a0a0a0"></div>
<div class="a" style="left:1068px;top:201px;width:1px;height:19px;background:#a0a0a0"></div>
<div class="a" style="left:1161px;top:201px;width:1px;height:19px;background:#a0a0a0"></div>
<div class="a" style="left:832px;top:203px;width:4px;height:14px;background:linear-gradient(#cdfdcd 0%,#c0fac0 35%,#90f290 42%,#02cc2a 43%,#02d42c 85%,#14c432 100%)"></div>
<div class="t" style="left:829px;width:139px;top:205px;text-align:center;font-size:11px;font-weight:bold;color:#000;letter-spacing:1px;text-indent:1px">3 %</div>
<div class="doth" style="left:335px;top:228px;width:8px"></div>
<svg class="a" style="left:342px;top:220px;" width="16" height="17" viewBox="0 0 16 17"><use href="#clock" width="16" height="17"/></svg>
<div class="a" style="left:362px;top:220px;width:911px;height:19px;border-bottom:1px solid #a0a0a0;border-left:1px solid #a0a0a0"></div>
<div class="t" style="left:365px;top:224px;font-size:11px;color:#101820;letter-spacing:-0.11px">Arrange meetings with stakeholders</div>
<div class="a" style="left:829px;top:220px;width:1px;height:19px;background:#a0a0a0"></div>
<div class="a" style="left:968px;top:220px;width:1px;height:19px;background:#a0a0a0"></div>
<div class="a" style="left:1068px;top:220px;width:1px;height:19px;background:#a0a0a0"></div>
<div class="a" style="left:1161px;top:220px;width:1px;height:19px;background:#a0a0a0"></div>
<div class="t" style="left:829px;width:139px;top:224px;text-align:center;font-size:11px;font-weight:normal;color:#000;letter-spacing:0;text-indent:0">0 %</div>
<svg class="a" style="left:971px;top:220px;" width="18" height="18" viewBox="0 0 18 18"><use href="#draft" width="18" height="18"/></svg>
<div class="t" style="left:991px;top:224px;font-size:11px;color:#101820;letter-spacing:0.23px">Draft</div>
<svg class="a" style="left:1072px;top:221px;" width="16" height="16" viewBox="0 0 16 16"><use href="#ball" width="16" height="16"/></svg>
<div class="t" style="left:1091px;top:224px;font-size:11px;color:#101820;letter-spacing:-0.49px">Normal</div>
<div class="t" style="left:1163px;top:224px;font-size:11px;color:#101820;letter-spacing:-0.32px">Julia Brown</div>
<div class="doth" style="left:335px;top:247px;width:8px"></div>
<svg class="a" style="left:342px;top:239px;" width="16" height="17" viewBox="0 0 16 17"><use href="#clock" width="16" height="17"/></svg>
<div class="a" style="left:362px;top:239px;width:911px;height:19px;border-bottom:1px solid #a0a0a0;border-left:1px solid #a0a0a0"></div>
<div class="t" style="left:365px;top:243px;font-size:11px;color:#101820;letter-spacing:-0.01px">Identify durations and resources requirements per activity</div>
<div class="a" style="left:829px;top:239px;width:1px;height:19px;background:#a0a0a0"></div>
<div class="a" style="left:968px;top:239px;width:1px;height:19px;background:#a0a0a0"></div>
<div class="a" style="left:1068px;top:239px;width:1px;height:19px;background:#a0a0a0"></div>
<div class="a" style="left:1161px;top:239px;width:1px;height:19px;background:#a0a0a0"></div>
<div class="t" style="left:829px;width:139px;top:243px;text-align:center;font-size:11px;font-weight:normal;color:#000;letter-spacing:0;text-indent:0">0 %</div>
<svg class="a" style="left:971px;top:239px;" width="18" height="18" viewBox="0 0 18 18"><use href="#created" width="18" height="18"/></svg>
<div class="t" style="left:991px;top:243px;font-size:11px;color:#101820;letter-spacing:-0.06px">Created</div>
<svg class="a" style="left:1072px;top:240px;" width="16" height="16" viewBox="0 0 16 16"><use href="#ball" width="16" height="16"/></svg>
<div class="t" style="left:1091px;top:243px;font-size:11px;color:#101820;letter-spacing:-0.49px">Normal</div>
<div class="t" style="left:1163px;top:243px;font-size:11px;color:#101820;letter-spacing:-0.2px">Robert Jackson</div>
<div class="doth" style="left:335px;top:266px;width:8px"></div>
<svg class="a" style="left:342px;top:258px;" width="16" height="17" viewBox="0 0 16 17"><use href="#clock" width="16" height="17"/></svg>
<div class="a" style="left:362px;top:258px;width:911px;height:19px;border-bottom:1px solid #a0a0a0;border-left:1px solid #a0a0a0"></div>
<div class="t" style="left:365px;top:262px;font-size:11px;color:#101820;letter-spacing:-0.06px">Define standards and requirements for quality</div>
<div class="a" style="left:829px;top:258px;width:1px;height:19px;background:#a0a0a0"></div>
<div class="a" style="left:968px;top:258px;width:1px;height:19px;background:#a0a0a0"></div>
<div class="a" style="left:1068px;top:258px;width:1px;height:19px;background:#a0a0a0"></div>
<div class="a" style="left:1161px;top:258px;width:1px;height:19px;background:#a0a0a0"></div>
<div class="t" style="left:829px;width:139px;top:262px;text-align:center;font-size:11px;font-weight:normal;color:#000;letter-spacing:0;text-indent:0">0 %</div>
<svg class="a" style="left:971px;top:258px;" width="18" height="18" viewBox="0 0 18 18"><use href="#created" width="18" height="18"/></svg>
<div class="t" style="left:991px;top:262px;font-size:11px;color:#101820;letter-spacing:-0.06px">Created</div>
<svg class="a" style="left:1072px;top:259px;" width="16" height="16" viewBox="0 0 16 16"><use href="#ball" width="16" height="16"/></svg>
<div class="t" style="left:1091px;top:262px;font-size:11px;color:#101820;letter-spacing:-0.49px">Normal</div>
<div class="t" style="left:1163px;top:262px;font-size:11px;color:#101820;letter-spacing:-0.48px">William Smith</div>
<div class="doth" style="left:335px;top:285px;width:8px"></div>
<svg class="a" style="left:342px;top:277px;" width="16" height="17" viewBox="0 0 16 17"><use href="#clock" width="16" height="17"/></svg>
<div class="a" style="left:362px;top:277px;width:911px;height:19px;border-bottom:1px solid #a0a0a0;border-left:1px solid #a0a0a0"></div>
<div class="t" style="left:365px;top:281px;font-size:11px;color:#101820;letter-spacing:-0.19px">List skills and knowledge required for team members</div>
<div class="a" style="left:829px;top:277px;width:1px;height:19px;background:#a0a0a0"></div>
<div class="a" style="left:968px;top:277px;width:1px;height:19px;background:#a0a0a0"></div>
<div class="a" style="left:1068px;top:277px;width:1px;height:19px;background:#a0a0a0"></div>
<div class="a" style="left:1161px;top:277px;width:1px;height:19px;background:#a0a0a0"></div>
<div class="t" style="left:829px;width:139px;top:281px;text-align:center;font-size:11px;font-weight:normal;color:#000;letter-spacing:0;text-indent:0">0 %</div>
<svg class="a" style="left:971px;top:277px;" width="18" height="18" viewBox="0 0 18 18"><use href="#draft" width="18" height="18"/></svg>
<div class="t" style="left:991px;top:281px;font-size:11px;color:#101820;letter-spacing:0.23px">Draft</div>
<svg class="a" style="left:1072px;top:278px;" width="16" height="16" viewBox="0 0 16 16"><use href="#ball" width="16" height="16"/></svg>
<div class="t" style="left:1091px;top:281px;font-size:11px;color:#101820;letter-spacing:-0.49px">Normal</div>
<div class="t" style="left:1163px;top:281px;font-size:11px;color:#101820;letter-spacing:-0.27px">Jack Grabovsky</div>
<div class="doth" style="left:335px;top:304px;width:8px"></div>
<svg class="a" style="left:342px;top:296px;" width="16" height="17" viewBox="0 0 16 17"><use href="#clock" width="16" height="17"/></svg>
<div class="a" style="left:362px;top:296px;width:911px;height:19px;border-bottom:1px solid #a0a0a0;border-left:1px solid #a0a0a0"></div>
<div class="t" style="left:365px;top:300px;font-size:11px;color:#101820;letter-spacing:-0.1px">Organize interviews with candidates</div>
<div class="a" style="left:829px;top:296px;width:1px;height:19px;background:#a0a0a0"></div>
<div class="a" style="left:968px;top:296px;width:1px;height:19px;background:#a0a0a0"></div>
<div class="a" style="left:1068px;top:296px;width:1px;height:19px;background:#a0a0a0"></div>
<div class="a" style="left:1161px;top:296px;width:1px;height:19px;background:#a0a0a0"></div>
<div class="a" style="left:832px;top:298px;width:33px;height:14px;background:linear-gradient(#cdfdcd 0%,#c0fac0 35%,#90f290 42%,#02cc2a 43%,#02d42c 85%,#14c432 100%)"></div>
<div class="t" style="left:829px;width:139px;top:300px;text-align:center;font-size:11px;font-weight:normal;color:#000;letter-spacing:0;text-indent:0">25 %</div>
<svg class="a" style="left:971px;top:296px;" width="18" height="18" viewBox="0 0 18 18"><use href="#inprog" width="18" height="18"/></svg>
<div class="t" style="left:991px;top:300px;font-size:11px;color:#101820;letter-spacing:-0.15px">In Progress</div>
<svg class="a" style="left:1072px;top:297px;" width="16" height="16" viewBox="0 0 16 16"><use href="#ball" width="16" height="16"/></svg>
<div class="t" style="left:1091px;top:300px;font-size:11px;color:#101820;letter-spacing:-0.49px">Normal</div>
<div class="t" style="left:1163px;top:300px;font-size:11px;color:#101820;letter-spacing:-0.42px">Mark O'Niel</div>
<div class="doth" style="left:335px;top:323px;width:8px"></div>
<svg class="a" style="left:342px;top:315px;" width="16" height="17" viewBox="0 0 16 17"><use href="#clock" width="16" height="17"/></svg>
<div class="a" style="left:362px;top:315px;width:911px;height:19px;border-bottom:1px solid #a0a0a0;border-left:1px solid #a0a0a0"></div>
<div class="t" style="left:365px;top:319px;font-size:11px;color:#101820;letter-spacing:-0.18px">Choose what means of communication to use</div>
<div class="a" style="left:829px;top:315px;width:1px;height:19px;background:#a0a0a0"></div>
<div class="a" style="left:968px;top:315px;width:1px;height:19px;background:#a0a0a0"></div>
<div class="a" style="left:1068px;top:315px;width:1px;height:19px;background:#a0a0a0"></div>
<div class="a" style="left:1161px;top:315px;width:1px;height:19px;background:#a0a0a0"></div>
<div class="t" style="left:829px;width:139px;top:319px;text-align:center;font-size:11px;font-weight:normal;color:#000;letter-spacing:0;text-indent:0">0 %</div>
<svg class="a" style="left:971px;top:315px;" width="18" height="18" viewBox="0 0 18 18"><use href="#draft" width="18" height="18"/></svg>
<div class="t" style="left:991px;top:319px;font-size:11px;color:#101820;letter-spacing:0.23px">Draft</div>
<svg class="a" style="left:1072px;top:316px;" width="16" height="16" viewBox="0 0 16 16"><use href="#ball" width="16" height="16"/></svg>
<div class="t" style="left:1091px;top:319px;font-size:11px;color:#101820;letter-spacing:-0.49px">Normal</div>
<div class="t" style="left:1163px;top:319px;font-size:11px;color:#101820;letter-spacing:-0.32px">Julia Brown</div>
<div class="doth" style="left:335px;top:342px;width:8px"></div>
<svg class="a" style="left:342px;top:334px;" width="16" height="17" viewBox="0 0 16 17"><use href="#clock" width="16" height="17"/></svg>
<div class="a" style="left:362px;top:334px;width:911px;height:19px;border-bottom:1px solid #a0a0a0;border-left:1px solid #a0a0a0"></div>
<div class="t" style="left:365px;top:338px;font-size:11px;color:#101820;letter-spacing:-0.1px">Analyze identified risks and opportunities</div>
<div class="a" style="left:829px;top:334px;width:1px;height:19px;background:#a0a0a0"></div>
<div class="a" style="left:968px;top:334px;width:1px;height:19px;background:#a0a0a0"></div>
<div class="a" style="left:1068px;top:334px;width:1px;height:19px;background:#a0a0a0"></div>
<div class="a" style="left:1161px;top:334px;width:1px;height:19px;background:#a0a0a0"></div>
<div class="t" style="left:829px;width:139px;top:338px;text-align:center;font-size:11px;font-weight:normal;color:#000;letter-spacing:0;text-indent:0">0 %</div>
<svg class="a" style="left:971px;top:334px;" width="18" height="18" viewBox="0 0 18 18"><use href="#created" width="18" height="18"/></svg>
<div class="t" style="left:991px;top:338px;font-size:11px;color:#101820;letter-spacing:-0.06px">Created</div>
<svg class="a" style="left:1072px;top:335px;" width="16" height="16" viewBox="0 0 16 16"><use href="#ball" width="16" height="16"/></svg>
<div class="t" style="left:1091px;top:338px;font-size:11px;color:#101820;letter-spacing:-0.49px">Normal</div>
<div class="t" style="left:1163px;top:338px;font-size:11px;color:#101820;letter-spacing:-0.2px">Robert Jackson</div>
<div class="doth" style="left:335px;top:361px;width:8px"></div>
<svg class="a" style="left:342px;top:353px;" width="16" height="17" viewBox="0 0 16 17"><use href="#clock" width="16" height="17"/></svg>
<div class="a" style="left:362px;top:353px;width:911px;height:19px;border-bottom:1px solid #a0a0a0;border-left:1px solid #a0a0a0"></div>
<div class="t" style="left:365px;top:357px;font-size:11px;color:#101820;letter-spacing:-0.05px">List procurement items necessary for the project</div>
<div class="a" style="left:829px;top:353px;width:1px;height:19px;background:#a0a0a0"></div>
<div class="a" style="left:968px;top:353px;width:1px;height:19px;background:#a0a0a0"></div>
<div class="a" style="left:1068px;top:353px;width:1px;height:19px;background:#a0a0a0"></div>
<div class="a" style="left:1161px;top:353px;width:1px;height:19px;background:#a0a0a0"></div>
<div class="t" style="left:829px;width:139px;top:357px;text-align:center;font-size:11px;font-weight:normal;color:#000;letter-spacing:0;text-indent:0">0 %</div>
<svg class="a" style="left:971px;top:353px;" width="18" height="18" viewBox="0 0 18 18"><use href="#draft" width="18" height="18"/></svg>
<div class="t" style="left:991px;top:357px;font-size:11px;color:#101820;letter-spacing:0.23px">Draft</div>
<svg class="a" style="left:1072px;top:354px;" width="16" height="16" viewBox="0 0 16 16"><use href="#ball" width="16" height="16"/></svg>
<div class="t" style="left:1091px;top:357px;font-size:11px;color:#101820;letter-spacing:-0.49px">Normal</div>
<div class="t" style="left:1163px;top:357px;font-size:11px;color:#101820;letter-spacing:-0.32px">Julia Brown</div>
<div class="doth" style="left:335px;top:380px;width:8px"></div>
<svg class="a" style="left:342px;top:372px;" width="16" height="17" viewBox="0 0 16 17"><use href="#clock" width="16" height="17"/></svg>
<div class="a" style="left:362px;top:372px;width:911px;height:19px;border-bottom:1px solid #a0a0a0;border-left:1px solid #a0a0a0"></div>
<div class="t" style="left:365px;top:376px;font-size:11px;color:#101820;letter-spacing:-0.07px">Negotiate with vendors to establish supply relationship</div>
<div class="a" style="left:829px;top:372px;width:1px;height:19px;background:#a0a0a0"></div>
<div class="a" style="left:968px;top:372px;width:1px;height:19px;background:#a0a0a0"></div>
<div class="a" style="left:1068px;top:372px;width:1px;height:19px;background:#a0a0a0"></div>
<div class="a" style="left:1161px;top:372px;width:1px;height:19px;background:#a0a0a0"></div>
<div class="t" style="left:829px;width:139px;top:376px;text-align:center;font-size:11px;font-weight:normal;color:#000;letter-spacing:0;text-indent:0">0 %</div>
<svg class="a" style="left:971px;top:372px;" width="18" height="18" viewBox="0 0 18 18"><use href="#draft" width="18" height="18"/></svg>
<div class="t" style="left:991px;top:376px;font-size:11px;color:#101820;letter-spacing:0.23px">Draft</div>
<svg class="a" style="left:1072px;top:373px;" width="16" height="16" viewBox="0 0 16 16"><use href="#ball" width="16" height="16"/></svg>
<div class="t" style="left:1091px;top:376px;font-size:11px;color:#101820;letter-spacing:-0.49px">Normal</div>
<div class="t" style="left:1163px;top:376px;font-size:11px;color:#101820;letter-spacing:-0.33px">Jessica Alba</div>
<svg class="a" style="left:310px;top:395px;" width="9" height="9" viewBox="0 0 9 9"><use href="#minus" width="9" height="9"/></svg>
<svg class="a" style="left:324px;top:392px;" width="18" height="18" viewBox="0 0 18 18"><use href="#funfold" width="18" height="18"/></svg>
<div class="a" style="left:343px;top:391px;width:930px;height:19px;background:#c4f6f8;border-bottom:1px solid #a0a8b0;border-left:1px solid #a0a8b0"></div>
<div class="t" style="left:346px;top:395px;font-size:11px;font-weight:bold;letter-spacing:0.29px;color:#001020">2.2 Develop PM Plan</div>
<div class="a" style="left:829px;top:391px;width:1px;height:19px;background:#a0a0a0"></div>
<div class="a" style="left:968px;top:391px;width:1px;height:19px;background:#a0a0a0"></div>
<div class="a" style="left:1068px;top:391px;width:1px;height:19px;background:#a0a0a0"></div>
<div class="a" style="left:1161px;top:391px;width:1px;height:19px;background:#a0a0a0"></div>
<div class="a" style="left:832px;top:393px;width:51px;height:14px;background:linear-gradient(#cdfdcd 0%,#c0fac0 35%,#90f290 42%,#02cc2a 43%,#02d42c 85%,#14c432 100%)"></div>
<div class="t" style="left:829px;width:139px;top:395px;text-align:center;font-size:11px;font-weight:bold;color:#000;letter-spacing:1px;text-indent:1px">38 %</div>
<div class="doth" style="left:335px;top:418px;width:8px"></div>
<svg class="a" style="left:342px;top:410px;" width="16" height="17" viewBox="0 0 16 17"><use href="#clock" width="16" height="17"/></svg>
<div class="a" style="left:362px;top:410px;width:911px;height:19px;border-bottom:1px solid #a0a0a0;border-left:1px solid #a0a0a0"></div>
<div class="t" style="left:365px;top:414px;font-size:11px;color:#101820;letter-spacing:-0.11px">Develop scope statement</div>
<div class="a" style="left:829px;top:410px;width:1px;height:19px;background:#a0a0a0"></div>
<div class="a" style="left:968px;top:410px;width:1px;height:19px;background:#a0a0a0"></div>
<div class="a" style="left:1068px;top:410px;width:1px;height:19px;background:#a0a0a0"></div>
<div class="a" style="left:1161px;top:410px;width:1px;height:19px;background:#a0a0a0"></div>
<div class="a" style="left:832px;top:412px;width:100px;height:14px;background:linear-gradient(#cdfdcd 0%,#c0fac0 35%,#90f290 42%,#02cc2a 43%,#02d42c 85%,#14c432 100%)"></div>
<div class="t" style="left:829px;width:139px;top:414px;text-align:center;font-size:11px;font-weight:normal;color:#5a6a5a;letter-spacing:0;text-indent:0">75 %</div>
<svg class="a" style="left:971px;top:410px;" width="18" height="18" viewBox="0 0 18 18"><use href="#inprog" width="18" height="18"/></svg>
<div class="t" style="left:991px;top:414px;font-size:11px;color:#101820;letter-spacing:-0.15px">In Progress</div>
<svg class="a" style="left:1072px;top:411px;" width="16" height="16" viewBox="0 0 16 16"><use href="#urgent" width="16" height="16"/></svg>
<div class="t" style="left:1091px;top:414px;font-size:11px;color:#101820;letter-spacing:-0.01px">Urgent</div>
<div class="t" style="left:1163px;top:414px;font-size:11px;color:#101820;letter-spacing:-0.42px">Mark O'Niel</div>
<div class="doth" style="left:335px;top:437px;width:8px"></div>
<svg class="a" style="left:342px;top:429px;" width="16" height="17" viewBox="0 0 16 17"><use href="#clock" width="16" height="17"/></svg>
<div class="a" style="left:362px;top:429px;width:911px;height:19px;border-bottom:1px solid #a0a0a0;border-left:1px solid #a0a0a0"></div>
<div class="t" style="left:365px;top:433px;font-size:11px;color:#101820;letter-spacing:-0.73px">Build WBS</div>
<div class="a" style="left:829px;top:429px;width:1px;height:19px;background:#a0a0a0"></div>
<div class="a" style="left:968px;top:429px;width:1px;height:19px;background:#a0a0a0"></div>
<div class="a" style="left:1068px;top:429px;width:1px;height:19px;background:#a0a0a0"></div>
<div class="a" style="left:1161px;top:429px;width:1px;height:19px;background:#a0a0a0"></div>
<div class="a" style="left:832px;top:431px;width:100px;height:14px;background:linear-gradient(#cdfdcd 0%,#c0fac0 35%,#90f290 42%,#02cc2a 43%,#02d42c 85%,#14c432 100%)"></div>
<div class="t" style="left:829px;width:139px;top:433px;text-align:center;font-size:11px;font-weight:normal;color:#5a6a5a;letter-spacing:0;text-indent:0">75 %</div>
<svg class="a" style="left:971px;top:429px;" width="18" height="18" viewBox="0 0 18 18"><use href="#inprog" width="18" height="18"/></svg>
<div class="t" style="left:991px;top:433px;font-size:11px;color:#101820;letter-spacing:-0.15px">In Progress</div>
<svg class="a" style="left:1072px;top:430px;" width="16" height="16" viewBox="0 0 16 16"><use href="#ball" width="16" height="16"/></svg>
<div class="t" style="left:1091px;top:433px;font-size:11px;color:#101820;letter-spacing:-0.49px">Normal</div>
<div class="t" style="left:1163px;top:433px;font-size:11px;color:#101820;letter-spacing:-0.27px">Jack Grabovsky</div>
<div class="doth" style="left:335px;top:456px;width:8px"></div>
<svg class="a" style="left:342px;top:448px;" width="16" height="17" viewBox="0 0 16 17"><use href="#clock" width="16" height="17"/></svg>
<div class="a" style="left:362px;top:448px;width:911px;height:19px;border-bottom:1px solid #a0a0a0;border-left:1px solid #a0a0a0"></div>
<div class="t" style="left:365px;top:452px;font-size:11px;color:#101820;letter-spacing:-0.08px">Estimate costs per activity</div>
<div class="a" style="left:829px;top:448px;width:1px;height:19px;background:#a0a0a0"></div>
<div class="a" style="left:968px;top:448px;width:1px;height:19px;background:#a0a0a0"></div>
<div class="a" style="left:1068px;top:448px;width:1px;height:19px;background:#a0a0a0"></div>
<div class="a" style="left:1161px;top:448px;width:1px;height:19px;background:#a0a0a0"></div>
<div class="t" style="left:829px;width:139px;top:452px;text-align:center;font-size:11px;font-weight:normal;color:#000;letter-spacing:0;text-indent:0">0 %</div>
<svg class="a" style="left:971px;top:448px;" width="18" height="18" viewBox="0 0 18 18"><use href="#draft" width="18" height="18"/></svg>
<div class="t" style="left:991px;top:452px;font-size:11px;color:#101820;letter-spacing:0.23px">Draft</div>
<svg class="a" style="left:1072px;top:449px;" width="16" height="16" viewBox="0 0 16 16"><use href="#ball" width="16" height="16"/></svg>
<div class="t" style="left:1091px;top:452px;font-size:11px;color:#101820;letter-spacing:-0.49px">Normal</div>
<div class="t" style="left:1163px;top:452px;font-size:11px;color:#101820;letter-spacing:-0.2px">Robert Jackson</div>
<div class="doth" style="left:335px;top:475px;width:8px"></div>
<svg class="a" style="left:342px;top:467px;" width="16" height="17" viewBox="0 0 16 17"><use href="#clock" width="16" height="17"/></svg>
<div class="a" style="left:362px;top:467px;width:911px;height:19px;border-bottom:1px solid #a0a0a0;border-left:1px solid #a0a0a0"></div>
<div class="t" style="left:365px;top:471px;font-size:11px;color:#101820;letter-spacing:-0.01px">Create budget sheet</div>
<div class="a" style="left:829px;top:467px;width:1px;height:19px;background:#a0a0a0"></div>
<div class="a" style="left:968px;top:467px;width:1px;height:19px;background:#a0a0a0"></div>
<div class="a" style="left:1068px;top:467px;width:1px;height:19px;background:#a0a0a0"></div>
<div class="a" style="left:1161px;top:467px;width:1px;height:19px;background:#a0a0a0"></div>
<div class="t" style="left:829px;width:139px;top:471px;text-align:center;font-size:11px;font-weight:normal;color:#000;letter-spacing:0;text-indent:0">0 %</div>
<svg class="a" style="left:971px;top:467px;" width="18" height="18" viewBox="0 0 18 18"><use href="#draft" width="18" height="18"/></svg>
<div class="t" style="left:991px;top:471px;font-size:11px;color:#101820;letter-spacing:0.23px">Draft</div>
<svg class="a" style="left:1072px;top:468px;" width="16" height="16" viewBox="0 0 16 16"><use href="#ball" width="16" height="16"/></svg>
<div class="t" style="left:1091px;top:471px;font-size:11px;color:#101820;letter-spacing:-0.49px">Normal</div>
<div class="t" style="left:1163px;top:471px;font-size:11px;color:#101820;letter-spacing:-0.32px">Barbara Nickson</div>
<div class="a" style="left:0;top:708px;width:1280px;height:297px;background:#f0f0f0"></div>
<div class="a" style="left:1px;top:710px;width:669px;height:293px;border:1px solid #1a1a1a;border-right:none;background:#fff"></div>
<div class="a" style="left:668px;top:711px;width:1px;height:291px;background:#b0b0b0"></div>
<div class="a" style="left:2px;top:711px;width:666px;height:21px;background:#fff;border-bottom:1px solid #d8dce6"></div>
<svg class="a" style="left:9px;top:713px;" width="16" height="16" viewBox="0 0 16 16"><path d="M1.5 7 L8 2 L14.5 7 V15 H1.5 Z" fill="#dfe6f2" stroke="#8a9ab8" stroke-width="0.8"/><path d="M1.5 7 L8 11.5 L14.5 7" stroke="#8a9ab8" fill="#f8f2d0" stroke-width="0.8"/><path d="M3 5.5 L8 2 L13 5.5" fill="#7aa0e0"/></svg>
<div class="t" style="left:30px;top:716px;font-size:11px;letter-spacing:-0.07px">Notifications</div>
<svg class="a" style="left:619px;top:715px;" width="13" height="13" viewBox="0 0 13 13"><rect x="0.5" y="0.5" width="12" height="12" rx="1.5" fill="#dde3ee" stroke="#6a7a98"/><rect x="2" y="2" width="9" height="9" fill="#f4f6fa" stroke="#8894aa" stroke-width="0.6"/><rect x="4" y="5" width="5" height="3" fill="#fff" stroke="#3a4a68" stroke-width="0.9"/></svg>
<svg class="a" style="left:635px;top:715px;" width="12" height="12" viewBox="0 0 12 12"><path d="M2.5 1.5 h7 M3.5 1.5 L4 6.5 M8.5 1.5 L8 6.5 M1.5 7.5 h9 M6 7.5 v4.5" stroke="#7a7a7a" stroke-width="1.1" fill="none"/><rect x="4.3" y="2" width="3.4" height="5" fill="#e8e8e8"/><rect x="5.2" y="2.5" width="1.6" height="2" fill="#9a9a9a"/></svg>
<div class="a" style="left:650px;top:715px;width:14px;height:13px;border:1px solid #7a3028;border-radius:2px;background:linear-gradient(#eab0a4,#d88270 45%,#c05a48 50%,#c8705e);box-shadow:inset 0 0 0 1px rgba(255,255,255,0.35)"></div><svg class="a" style="left:650px;top:715px" width="14" height="13" viewBox="0 0 14 13"><path d="M4.8 4.3 L9.2 8.7 M9.2 4.3 L4.8 8.7" stroke="#fff" stroke-width="1.7"/></svg>
<div class="tb" style="left:2px;top:732px;width:666px;height:32px"></div>
<div class="grip" style="left:6px;top:737px;height:24px"></div>
<svg class="a" style="left:13px;top:739px;" width="18" height="18" viewBox="0 0 16 16"><path d="M2.6 7.2 A5.6 5.6 0 0 1 12.6 4.6" stroke="#2a9a2a" stroke-width="3.4" fill="none"/><path d="M2.6 7.2 A5.6 5.6 0 0 1 12.6 4.6" stroke="#8ee08e" stroke-width="1.8" fill="none"/><path d="M15 1 L15 8 L8.5 7.2 Z" fill="#5cc85c" stroke="#2a9a2a" stroke-width="0.7"/><path d="M13.4 8.8 A5.6 5.6 0 0 1 3.4 11.4" stroke="#2a9a2a" stroke-width="3.4" fill="none"/><path d="M13.4 8.8 A5.6 5.6 0 0 1 3.4 11.4" stroke="#8ee08e" stroke-width="1.8" fill="none"/><path d="M1 15 L1 8 L7.5 8.8 Z" fill="#5cc85c" stroke="#2a9a2a" stroke-width="0.7"/></svg>
<div class="a" style="left:37px;top:741px;width:1px;height:20px;background:#6a707c"></div>
<svg class="a" style="left:44px;top:741px;" width="16" height="16" viewBox="0 0 16 16"><path d="M1.5 7 L8 2.5 L14.5 7 V14.5 H1.5 Z" fill="#eeeeee" stroke="#a8a8a8" stroke-width="0.8"/><ellipse cx="8" cy="11" rx="5.5" ry="2.6" fill="#fff" stroke="#606060" stroke-width="0.8"/><circle cx="8" cy="11" r="1.6" fill="#404040"/></svg>
<svg class="a" style="left:68px;top:741px;" width="16" height="16" viewBox="0 0 16 16"><path d="M1.5 7 L8 2.5 L14.5 7 V14.5 H1.5 Z" fill="#eeeeee" stroke="#a8a8a8" stroke-width="0.8"/><path d="M3 6 L8 3 L13 6" fill="#9ab8e8"/><ellipse cx="8" cy="11" rx="5.5" ry="2.6" fill="#fff" stroke="#3a5a90" stroke-width="0.8"/><circle cx="8" cy="11" r="1.6" fill="#2a70c0"/></svg>
<div class="a" style="left:90px;top:741px;width:1px;height:20px;background:#6a707c"></div>
<div class="pbtn" style="left:93px;top:739px;width:24px;height:22px"></div>
<svg class="a" style="left:97px;top:741px;" width="16" height="16" viewBox="0 0 16 16"><path d="M1.5 7 L8 2.5 L14.5 7 V14.5 H1.5 Z" fill="#eeeeee" stroke="#a8a8a8" stroke-width="0.8"/><path d="M3 6 L8 3 L13 6" fill="#7aa0e0"/><ellipse cx="8" cy="11" rx="5.5" ry="2.6" fill="#fff" stroke="#3a5a90" stroke-width="0.8"/><circle cx="8" cy="11" r="1.6" fill="#2a70c0"/></svg>
<svg class="a" style="left:121px;top:741px;" width="16" height="16" viewBox="0 0 16 16"><path d="M1.5 7 L8 2.5 L14.5 7 V14.5 H1.5 Z" fill="#eeeeee" stroke="#a8a8a8" stroke-width="0.8"/><circle cx="6" cy="10.5" r="4.5" fill="#505050" stroke="#b0b0b0" stroke-width="1.2"/><path d="M6 8v2.5h2" stroke="#fff" stroke-width="1" fill="none"/></svg>
<div class="pbtn" style="left:141px;top:739px;width:24px;height:22px"></div>
<svg class="a" style="left:145px;top:741px;" width="16" height="16" viewBox="0 0 16 16"><rect x="1.5" y="1.5" width="11" height="13" fill="#fff" stroke="#909090"/><path d="M3.5 5h6M3.5 7.5h6M3.5 10h4" stroke="#505050"/><path d="M10 8 L15 11 L10 14 Z" fill="#3a7ad8"/></svg>
<div class="a" style="left:167px;top:741px;width:1px;height:20px;background:#6a707c"></div>
<svg class="a" style="left:174px;top:741px;" width="16" height="16" viewBox="0 0 16 16"><rect x="7.5" y="1.5" width="7" height="10" fill="#f4f4f4" stroke="#cfcfcf"/><circle cx="6" cy="10.5" r="4.8" fill="#606060" stroke="#b8b8b8" stroke-width="1.4"/><path d="M6 8v2.6h2" stroke="#fff" stroke-width="1.1" fill="none"/><path d="M8 14 L14 7 L15.5 8.5 L9.5 15 Z" fill="#c0c0c0" stroke="#808080" stroke-width="0.5"/></svg>
<svg class="a" style="left:198px;top:741px;" width="16" height="16" viewBox="0 0 16 16"><circle cx="6" cy="10.5" r="4.8" fill="#707070" stroke="#b8b8b8" stroke-width="1.4"/><path d="M9 15 L9 5 Q9 3.5 10 3.5 Q11 3.5 11 5 L11 9 L14 9.5 Q15 10 15 11 L14.5 15 Z" fill="#f0f0f0" stroke="#808080" stroke-width="0.7"/></svg>
<div class="a" style="left:220px;top:741px;width:1px;height:20px;background:#6a707c"></div>
<svg class="a" style="left:227px;top:741px;" width="16" height="16" viewBox="0 0 16 16"><rect x="1.5" y="1.5" width="9" height="13" fill="#f8f8f8" stroke="#c4c4c4"/><path d="M3 4.5h1 M5 4.5h4 M3 7h1 M5 7h4 M3 9.5h1 M5 9.5h4 M3 12h1 M5 12h4" stroke="#505050" stroke-width="1"/><rect x="10.5" y="1.5" width="2.5" height="13" fill="#e4e4e4" stroke="#c4c4c4"/><rect x="13" y="1.5" width="2.5" height="13" fill="#f4f4f4" stroke="#c4c4c4"/></svg>
<div class="dd" style="left:245px;top:747px"></div>
<div class="a" style="left:259px;top:741px;width:1px;height:20px;background:#6a707c"></div>
<svg class="a" style="left:265px;top:740px;" width="17" height="17" viewBox="0 0 17 17"><g opacity="0.55"><use href="#funnel" width="17" height="17"/></g><path d="M8.5 14.5 L13 9.5 L15.5 11.8 L11 16 Z" fill="#fafafa" stroke="#b8b8b8" stroke-width="0.8" stroke-linejoin="round"/></svg>
<svg class="a" style="left:289px;top:740px;" width="17" height="17" viewBox="0 0 17 17"><g opacity="0.55"><use href="#funnel" width="17" height="17"/></g></svg>
<div class="dd" style="left:312px;top:754px"></div>
<div class="a" style="left:2px;top:763px;width:666px;height:1px;background:#a0a0a0"></div>
<div class="a" style="left:3px;top:764px;width:665px;height:16px;background:linear-gradient(#fff 0%,#fff 40%,#f1f2f4 41%,#e8e9ec 100%);border-bottom:1px solid #d5d5d5"></div>
<div class="t" style="left:3px;width:268px;top:767px;text-align:center;font-size:11px">Title</div>
<div class="a" style="left:271px;top:765px;width:1px;height:14px;background:#d8d9dc"></div>
<div class="t" style="left:271px;width:139px;top:767px;text-align:center;font-size:11px">Date Created</div>
<div class="a" style="left:427px;top:765px;width:1px;height:14px;background:#d8d9dc"></div>
<div class="t" style="left:427px;width:89px;top:767px;text-align:center;font-size:11px">Creator</div>
<div class="a" style="left:547px;top:765px;width:1px;height:14px;background:#d8d9dc"></div>
<div class="t" style="left:547px;width:121px;top:767px;text-align:center;font-size:11px">Task group</div>
<div class="a" style="left:410px;top:766px;width:15px;height:13px;border:1px solid #9a9a9a;background:linear-gradient(#fafafa,#e0e0e0)"></div>
<div class="a" style="left:414px;top:772px;width:0;height:0;border-left:3.5px solid transparent;border-right:3.5px solid transparent;border-top:4px solid #000"></div>
<div class="a" style="left:530px;top:766px;width:15px;height:13px;border:1px solid #9a9a9a;background:linear-gradient(#fafafa,#e0e0e0)"></div>
<div class="a" style="left:534px;top:772px;width:0;height:0;border-left:3.5px solid transparent;border-right:3.5px solid transparent;border-top:4px solid #000"></div>
<svg class="a" style="left:518px;top:767px;" width="9" height="9" viewBox="0 0 9 9"><path d="M4.5 1 L8 8 L1 8 Z" fill="#fff" stroke="#a0a0a0" stroke-width="0.8"/></svg>
<div class="a" style="left:3px;top:780px;width:665px;height:20px;border-bottom:1px solid #a0a0a0"></div>
<div class="a" style="left:271px;top:780px;width:1px;height:19px;background:#a0a0a0"></div>
<div class="a" style="left:427px;top:780px;width:1px;height:19px;background:#a0a0a0"></div>
<div class="a" style="left:547px;top:780px;width:1px;height:19px;background:#a0a0a0"></div>
<div class="t" style="left:5px;top:784px;font-size:12px;font-weight:bold;letter-spacing:0.03px">[ 84 ] Develop scope statement</div>
<div class="t" style="left:275px;top:784px;font-size:12px;font-weight:bold;letter-spacing:0.49px">5/20/2011 11:44:20 AM</div>
<div class="t" style="left:429px;top:784px;font-size:12px;font-weight:bold;letter-spacing:-0.08px">Jack Grabovsky</div>
<div class="a" style="left:548px;top:780px;width:119px;height:19px;overflow:hidden"><div class="t" style="left:1px;top:4px;font-size:12px;font-weight:bold;letter-spacing:0.5px">2.2 Develop PM Plan</div></div>
<div class="t" style="left:23px;top:802px;font-size:12px;font-weight:bold;color:#0000c8;letter-spacing:-0.17px">Priority: Normal -&gt; Urgent</div>
<div class="t" style="left:23px;top:815px;font-size:12px;font-weight:bold;color:#0000c8;letter-spacing:-0.06px">Status: (Default)Completed -&gt; (Default)In Progress</div>
<div class="t" style="left:23px;top:828px;font-size:12px;font-weight:bold;color:#0000c8;letter-spacing:0.05px">Complete: 100.00 % -&gt; 75.00 %</div>
<div class="a" style="left:3px;top:843px;width:665px;height:1px;background:#a0a0a0"></div>
<div class="a" style="left:3px;top:844px;width:665px;height:20px;border-bottom:1px solid #a0a0a0"></div>
<div class="a" style="left:271px;top:844px;width:1px;height:19px;background:#a0a0a0"></div>
<div class="a" style="left:427px;top:844px;width:1px;height:19px;background:#a0a0a0"></div>
<div class="a" style="left:547px;top:844px;width:1px;height:19px;background:#a0a0a0"></div>
<div class="t" style="left:5px;top:848px;font-size:12px;font-weight:bold;letter-spacing:0.03px">[ 92 ] Organize interviews with candidates</div>
<div class="t" style="left:275px;top:848px;font-size:12px;font-weight:bold;letter-spacing:0.49px">5/20/2011 11:44:37 AM</div>
<div class="t" style="left:429px;top:848px;font-size:12px;font-weight:bold;letter-spacing:-0.08px">Jack Grabovsky</div>
<div class="a" style="left:548px;top:844px;width:119px;height:19px;overflow:hidden"><div class="t" style="left:1px;top:4px;font-size:12px;font-weight:bold;letter-spacing:0.5px">2.1 Develop Subsidiary Plans</div></div>
<div class="t" style="left:23px;top:866px;font-size:12px;font-weight:bold;color:#0000c8;letter-spacing:0.06px">Note has been changed</div>
<div class="t" style="left:23px;top:879px;font-size:12px;font-weight:bold;color:#0000c8;letter-spacing:-0.04px">Attachment has been changed</div>
<div class="a" style="left:3px;top:893px;width:665px;height:1px;background:#a0a0a0"></div>
<div class="a" style="left:670px;top:710px;width:610px;height:293px;border:1px solid #1a1a1a;border-right:none;background:#fff"></div>
<div class="a" style="left:671px;top:711px;width:609px;height:21px;background:#fff;border-bottom:1px solid #d8dce6"></div>
<svg class="a" style="left:680px;top:713px;" width="16" height="16" viewBox="0 0 16 16"><circle cx="8" cy="5" r="3.5" fill="#c8d0dc" stroke="#7a8698" stroke-width="0.8"/><path d="M2 15.5 Q2 9.5 8 9.5 Q14 9.5 14 15.5 Z" fill="#b8c4d4" stroke="#7a8698" stroke-width="0.8"/></svg>
<div class="t" style="left:700px;top:716px;font-size:11px;letter-spacing:-0.21px">Resource Assignment</div>
<svg class="a" style="left:1228px;top:715px;" width="13" height="13" viewBox="0 0 13 13"><rect x="0.5" y="0.5" width="12" height="12" rx="1.5" fill="#dde3ee" stroke="#6a7a98"/><rect x="2" y="2" width="9" height="9" fill="#f4f6fa" stroke="#8894aa" stroke-width="0.6"/><rect x="4" y="5" width="5" height="3" fill="#fff" stroke="#3a4a68" stroke-width="0.9"/></svg>
<svg class="a" style="left:1244px;top:715px;" width="12" height="12" viewBox="0 0 12 12"><path d="M2.5 1.5 h7 M3.5 1.5 L4 6.5 M8.5 1.5 L8 6.5 M1.5 7.5 h9 M6 7.5 v4.5" stroke="#7a7a7a" stroke-width="1.1" fill="none"/><rect x="4.3" y="2" width="3.4" height="5" fill="#e8e8e8"/><rect x="5.2" y="2.5" width="1.6" height="2" fill="#9a9a9a"/></svg>
<div class="a" style="left:1261px;top:715px;width:14px;height:13px;border:1px solid #7a3028;border-radius:2px;background:linear-gradient(#eab0a4,#d88270 45%,#c05a48 50%,#c8705e);box-shadow:inset 0 0 0 1px rgba(255,255,255,0.35)"></div><svg class="a" style="left:1261px;top:715px" width="14" height="13" viewBox="0 0 14 13"><path d="M4.8 4.3 L9.2 8.7 M9.2 4.3 L4.8 8.7" stroke="#fff" stroke-width="1.7"/></svg>
<div class="tb" style="left:671px;top:732px;width:607px;height:31px"></div>
<div class="grip" style="left:676px;top:737px;height:22px"></div>
<svg class="a" style="left:685px;top:741px;" width="16" height="16" viewBox="0 0 16 16"><rect x="1.5" y="1.5" width="9" height="13" fill="#f8f8f8" stroke="#c4c4c4"/><path d="M3 4.5h1 M5 4.5h4 M3 7h1 M5 7h4 M3 9.5h1 M5 9.5h4 M3 12h1 M5 12h4" stroke="#505050" stroke-width="1"/><rect x="10.5" y="1.5" width="2.5" height="13" fill="#e4e4e4" stroke="#c4c4c4"/><rect x="13" y="1.5" width="2.5" height="13" fill="#f4f4f4" stroke="#c4c4c4"/></svg>
<div class="dd" style="left:703px;top:747px"></div>
<div class="dd" style="left:717px;top:754px"></div>
<div class="a" style="left:673px;top:765px;width:604px;height:15px;background:#a0a0a0"></div>
<div class="a" style="left:672px;top:782px;width:605px;height:220px;border:1px solid #a0a0a0;border-bottom:none;background:#fff"></div>
<div class="a" style="left:674px;top:783px;width:602px;height:16px;background:linear-gradient(#fff 0%,#fff 40%,#f1f2f4 41%,#e8e9ec 100%);border-bottom:1px solid #d5d5d5"></div>
<div class="t" style="left:673px;width:24px;top:788px;text-align:center;font-size:11px">...</div>
<div class="a" style="left:697px;top:784px;width:1px;height:15px;background:#e2e3e6"></div>
<div class="t" style="left:697px;width:225px;top:786px;text-align:center;font-size:11px">Name</div>
<div class="a" style="left:922px;top:784px;width:1px;height:15px;background:#e2e3e6"></div>
<div class="t" style="left:922px;width:178px;top:786px;text-align:center;font-size:11px">Department</div>
<div class="a" style="left:1100px;top:784px;width:1px;height:15px;background:#e2e3e6"></div>
<div class="t" style="left:1100px;width:176px;top:786px;text-align:center;font-size:11px">Job title</div>
<div class="a" style="left:674px;top:800px;width:602px;height:18px;background:#efefef;border-bottom:1px solid #a0a0a0"></div>
<div class="a" style="left:697px;top:800px;width:1px;height:18px;background:#a0a0a0"></div>
<div class="a" style="left:922px;top:800px;width:1px;height:18px;background:#a0a0a0"></div>
<div class="a" style="left:1100px;top:800px;width:1px;height:18px;background:#a0a0a0"></div>
<div class="a" style="left:676px;top:803px;width:13px;height:13px;border:1px solid #8e8f8f;background:linear-gradient(135deg,#d8d8d8,#f8f8f8);box-shadow:inset 0 0 0 1px #f4f4f4"></div>
<div class="t" style="left:700px;top:804px;font-size:11px;letter-spacing:-0.37px">Administrator</div>
<div class="t" style="left:926px;top:804px;font-size:11px;letter-spacing:0px"></div>
<div class="t" style="left:1103px;top:804px;font-size:11px;letter-spacing:0px"></div>
<div class="a" style="left:674px;top:818px;width:602px;height:18px;background:#fff;border-bottom:1px solid #a0a0a0"></div>
<div class="a" style="left:697px;top:818px;width:1px;height:18px;background:#a0a0a0"></div>
<div class="a" style="left:922px;top:818px;width:1px;height:18px;background:#a0a0a0"></div>
<div class="a" style="left:1100px;top:818px;width:1px;height:18px;background:#a0a0a0"></div>
<div class="a" style="left:676px;top:821px;width:13px;height:13px;border:1px solid #8e8f8f;background:linear-gradient(135deg,#d8d8d8,#f8f8f8);box-shadow:inset 0 0 0 1px #f4f4f4"></div>
<div class="t" style="left:700px;top:822px;font-size:11px;letter-spacing:-0.05px">Jack Grabovsky</div>
<div class="t" style="left:926px;top:822px;font-size:11px;letter-spacing:-0.27px">Management</div>
<div class="t" style="left:1103px;top:822px;font-size:11px;letter-spacing:-0.18px">Project Manager</div>
<div class="a" style="left:674px;top:836px;width:602px;height:18px;background:#fff;border-bottom:1px solid #a0a0a0"></div>
<div class="a" style="left:697px;top:836px;width:1px;height:18px;background:#a0a0a0"></div>
<div class="a" style="left:922px;top:836px;width:1px;height:18px;background:#a0a0a0"></div>
<div class="a" style="left:1100px;top:836px;width:1px;height:18px;background:#a0a0a0"></div>
<div class="a" style="left:676px;top:839px;width:13px;height:13px;border:1px solid #8e8f8f;background:linear-gradient(135deg,#d8d8d8,#f8f8f8);box-shadow:inset 0 0 0 1px #f4f4f4"></div>
<div class="t" style="left:700px;top:840px;font-size:11px;letter-spacing:-0.12px">Michael Romanov</div>
<div class="t" style="left:926px;top:840px;font-size:11px;letter-spacing:-0.2px">Purchasing</div>
<div class="t" style="left:1103px;top:840px;font-size:11px;letter-spacing:-0.18px">Logistics Manager</div>
<div class="a" style="left:674px;top:854px;width:602px;height:18px;background:#fff;border-bottom:1px solid #a0a0a0"></div>
<div class="a" style="left:697px;top:854px;width:1px;height:18px;background:#a0a0a0"></div>
<div class="a" style="left:922px;top:854px;width:1px;height:18px;background:#a0a0a0"></div>
<div class="a" style="left:1100px;top:854px;width:1px;height:18px;background:#a0a0a0"></div>
<div class="a" style="left:676px;top:857px;width:13px;height:13px;border:1px solid #8e8f8f;background:linear-gradient(135deg,#d8d8d8,#f8f8f8);box-shadow:inset 0 0 0 1px #f4f4f4"></div>
<div class="t" style="left:700px;top:858px;font-size:11px;letter-spacing:-0.14px">Julia Brown</div>
<div class="t" style="left:926px;top:858px;font-size:11px;letter-spacing:-0.2px">Purchasing</div>
<div class="t" style="left:1103px;top:858px;font-size:11px;letter-spacing:-0.15px">Supply Agent</div>
<div class="a" style="left:674px;top:872px;width:602px;height:18px;background:#fff;border-bottom:1px solid #a0a0a0"></div>
<div class="a" style="left:697px;top:872px;width:1px;height:18px;background:#a0a0a0"></div>
<div class="a" style="left:922px;top:872px;width:1px;height:18px;background:#a0a0a0"></div>
<div class="a" style="left:1100px;top:872px;width:1px;height:18px;background:#a0a0a0"></div>
<div class="a" style="left:676px;top:875px;width:13px;height:13px;border:1px solid #8e8f8f;background:linear-gradient(135deg,#d8d8d8,#f8f8f8);box-shadow:inset 0 0 0 1px #f4f4f4"></div>
<div class="t" style="left:700px;top:876px;font-size:11px;letter-spacing:-0.05px">Robert Jackson</div>
<div class="t" style="left:926px;top:876px;font-size:11px;letter-spacing:0.09px">Technical</div>
<div class="t" style="left:1103px;top:876px;font-size:11px;letter-spacing:-0.26px">Engineer</div>
<div class="a" style="left:674px;top:890px;width:602px;height:18px;background:#fff;border-bottom:1px solid #a0a0a0"></div>
<div class="a" style="left:697px;top:890px;width:1px;height:18px;background:#a0a0a0"></div>
<div class="a" style="left:922px;top:890px;width:1px;height:18px;background:#a0a0a0"></div>
<div class="a" style="left:1100px;top:890px;width:1px;height:18px;background:#a0a0a0"></div>
<div class="a" style="left:676px;top:893px;width:13px;height:13px;border:1px solid #8e8f8f;background:linear-gradient(135deg,#d8d8d8,#f8f8f8);box-shadow:inset 0 0 0 1px #f4f4f4"></div>
<div class="t" style="left:700px;top:894px;font-size:11px;letter-spacing:-0.28px">William Smith</div>
<div class="t" style="left:926px;top:894px;font-size:11px;letter-spacing:0.09px">Technical</div>
<div class="t" style="left:1103px;top:894px;font-size:11px;letter-spacing:0px"></div>
<div class="a" style="left:674px;top:908px;width:602px;height:18px;background:#fff;border-bottom:1px solid #a0a0a0"></div>
<div class="a" style="left:697px;top:908px;width:1px;height:18px;background:#a0a0a0"></div>
<div class="a" style="left:922px;top:908px;width:1px;height:18px;background:#a0a0a0"></div>
<div class="a" style="left:1100px;top:908px;width:1px;height:18px;background:#a0a0a0"></div>
<div class="a" style="left:676px;top:911px;width:13px;height:13px;border:1px solid #8e8f8f;background:linear-gradient(135deg,#d8d8d8,#f8f8f8);box-shadow:inset 0 0 0 1px #f4f4f4"></div>
<div class="t" style="left:700px;top:912px;font-size:11px;letter-spacing:-0.12px">Barbara Nickson</div>
<div class="t" style="left:926px;top:912px;font-size:11px;letter-spacing:-0.27px">Management</div>
<div class="t" style="left:1103px;top:912px;font-size:11px;letter-spacing:-0.46px">Supervisor</div>
<div class="a" style="left:674px;top:926px;width:602px;height:18px;background:#fff;border-bottom:1px solid #a0a0a0"></div>
<div class="a" style="left:697px;top:926px;width:1px;height:18px;background:#a0a0a0"></div>
<div class="a" style="left:922px;top:926px;width:1px;height:18px;background:#a0a0a0"></div>
<div class="a" style="left:1100px;top:926px;width:1px;height:18px;background:#a0a0a0"></div>
<div class="a" style="left:676px;top:929px;width:13px;height:13px;border:1px solid #8e8f8f;background:linear-gradient(135deg,#d8d8d8,#f8f8f8);box-shadow:inset 0 0 0 1px #f4f4f4"></div>
<div class="t" style="left:700px;top:930px;font-size:11px;letter-spacing:-0.13px">Jessica Alba</div>
<div class="t" style="left:926px;top:930px;font-size:11px;letter-spacing:-0.2px">Purchasing</div>
<div class="t" style="left:1103px;top:930px;font-size:11px;letter-spacing:-0.15px">Supply Agent</div>
<div class="a" style="left:674px;top:944px;width:602px;height:18px;background:#fff;border-bottom:1px solid #a0a0a0"></div>
<div class="a" style="left:697px;top:944px;width:1px;height:18px;background:#a0a0a0"></div>
<div class="a" style="left:922px;top:944px;width:1px;height:18px;background:#a0a0a0"></div>
<div class="a" style="left:1100px;top:944px;width:1px;height:18px;background:#a0a0a0"></div>
<div class="a" style="left:676px;top:947px;width:13px;height:13px;border:1px solid #8e8f8f;background:linear-gradient(135deg,#d8d8d8,#f8f8f8);box-shadow:inset 0 0 0 1px #f4f4f4"></div>
<div class="t" style="left:700px;top:948px;font-size:11px;letter-spacing:-0.08px">Mark O'Niel</div>
<div class="t" style="left:926px;top:948px;font-size:11px;letter-spacing:0.09px">Technical</div>
<div class="t" style="left:1103px;top:948px;font-size:11px;letter-spacing:-0.26px">Engineer</div>
<div class="a" style="left:1278px;top:711px;width:2px;height:292px;background:#3a3a3a"></div>
<div class="a" style="left:0;top:1003px;width:1280px;height:1px;background:#a0a0a0"></div>
<div class="a" style="left:0;top:1004px;width:1280px;height:1px;background:#f8f8f8"></div>
<div class="a" style="left:0;top:1005px;width:1280px;height:17px;background:#eeeceb"></div>
<div class="a" style="left:4px;top:1009px;width:17px;height:8px;background:linear-gradient(#b8b8b8,#707070);border:1px solid #606060"></div>
<div class="a" style="left:28px;top:1006px;width:1px;height:15px;background:#c8c8c8"></div>
<div class="a" style="left:233px;top:1006px;width:102px;height:16px;background:linear-gradient(#f4f4f4,#d8d8d8);border:1px solid #b8b8b8;border-bottom:none;border-radius:2px 2px 0 0"></div>
<div class="t" style="left:233px;width:102px;top:1009px;text-align:center;font-size:10px">0 %</div>
<div class="a" style="left:0;top:1022px;width:1280px;height:1px;background:#50667e"></div>
<div class="a" style="left:0;top:1023px;width:1280px;height:1px;background:#d4e2f0"></div>
</body></html>
